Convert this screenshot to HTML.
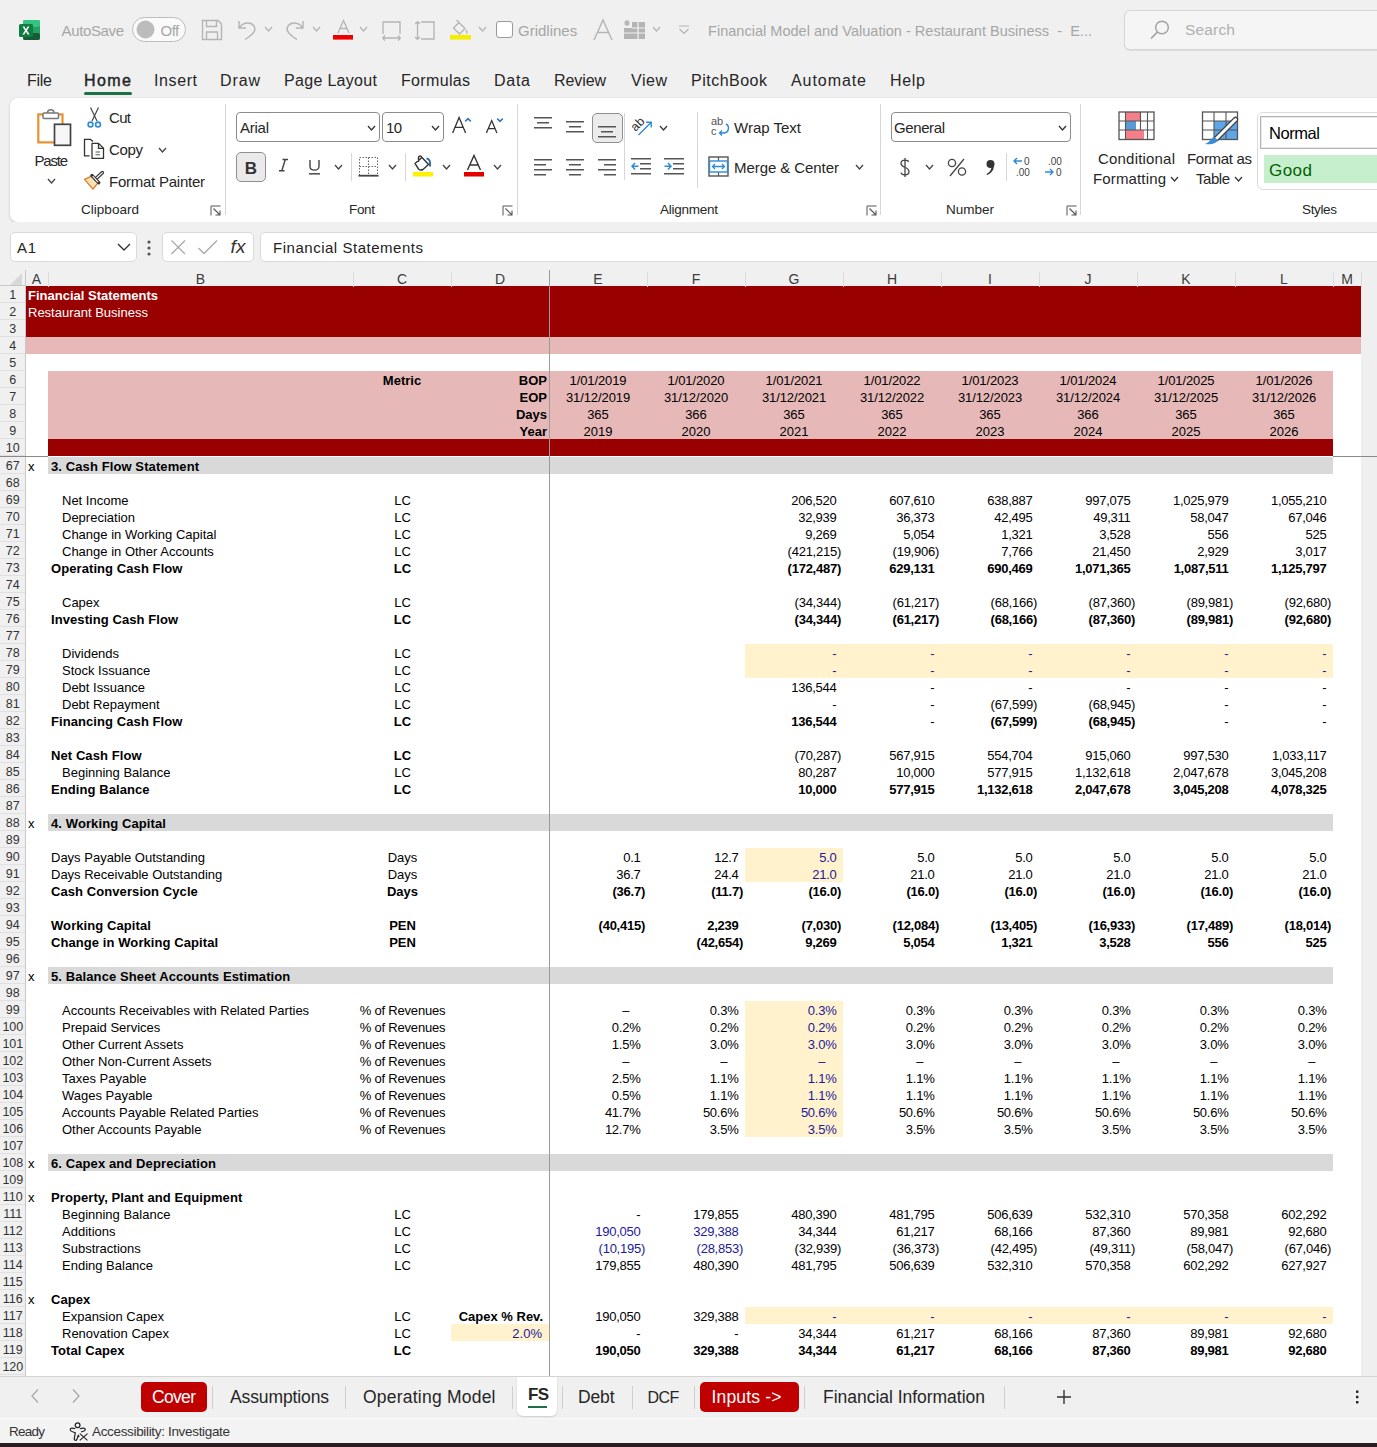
<!DOCTYPE html><html><head><meta charset="utf-8"><style>
*{margin:0;padding:0;box-sizing:border-box}
html,body{width:1377px;height:1447px;overflow:hidden;background:#f0f0f0;font-family:"Liberation Sans", sans-serif}
.t{position:absolute;white-space:pre}
.r{position:absolute}
</style></head><body><div class="r" style="left:0px;top:0px;width:1377px;height:98px;background:#f0f0f0;"></div><svg class="r" style="left:19px;top:19px;" width="22" height="22" viewBox="0 0 22 22"><rect x="4" y="1" width="17" height="20" rx="2" fill="#1f9d55"/><rect x="4" y="1" width="17" height="7" rx="2" fill="#33c481"/><rect x="11" y="8" width="10" height="7" fill="#21a366"/><rect x="4" y="14" width="17" height="7" rx="2" fill="#185c37"/><rect x="0" y="5" width="14" height="13" rx="1.5" fill="#107c41"/><path d="M3.6 7.5 L6 11.5 L3.4 15.5 H5.3 L7 12.7 L8.7 15.5 H10.6 L8 11.5 L10.4 7.5 H8.6 L7 10.3 L5.4 7.5Z" fill="#fff"/></svg><div class="t" style="top:23.30px;font-size:15px;line-height:15px;color:#a6a6a6;letter-spacing:-0.35px;left:61.5px;">AutoSave</div><div class="r" style="left:132px;top:17px;width:54px;height:25px;border:1.3px solid #bdbdbd;border-radius:13px;background:#fafafa"></div><svg class="r" style="left:136px;top:20px;" width="19" height="19" viewBox="0 0 19 19"><circle cx="9.5" cy="9.5" r="9" fill="#bcbcbc"/></svg><div class="t" style="top:23.30px;font-size:15px;line-height:15px;color:#a6a6a6;letter-spacing:-0.5px;left:160.5px;">Off</div><svg class="r" style="left:201px;top:19px;" width="22" height="22" viewBox="0 0 22 22"><path d="M1.5 1.5 H17 L20.5 5 V20.5 H1.5Z M5.5 1.5 V7.5 H15.5 V1.5 M5.5 20.5 V13 H16.5 V20.5" fill="none" stroke="#b4b4b4" stroke-width="1.4"/></svg><svg class="r" style="left:237px;top:19px;" width="21" height="22" viewBox="0 0 21 22"><path d="M2 2 V9 H9 M2.5 8.5 C6 3 14 2.5 17 7 C19.5 11 17 15 8 20.5" fill="none" stroke="#b4b4b4" stroke-width="1.4"/></svg><svg class="r" style="left:264px;top:26px;" width="9" height="6" viewBox="0 0 9 6"><path d="M1 1 L4.5 5 L8 1" fill="none" stroke="#b4b4b4" stroke-width="1.2"/></svg><svg class="r" style="left:284px;top:19px;" width="21" height="22" viewBox="0 0 21 22"><path d="M19 2 V9 H12 M18.5 8.5 C15 3 7 2.5 4 7 C1.5 11 4 15 13 20.5" fill="none" stroke="#b4b4b4" stroke-width="1.4"/></svg><svg class="r" style="left:312px;top:26px;" width="9" height="6" viewBox="0 0 9 6"><path d="M1 1 L4.5 5 L8 1" fill="none" stroke="#b4b4b4" stroke-width="1.2"/></svg><svg class="r" style="left:333px;top:19px;" width="21" height="22" viewBox="0 0 21 22"><path d="M5 14 L10.5 1.5 L16 14 M7 9.5 H14" fill="none" stroke="#b4b4b4" stroke-width="1.3"/><rect x="0" y="16" width="20" height="4.6" fill="#ee0000"/></svg><svg class="r" style="left:359px;top:26px;" width="9" height="6" viewBox="0 0 9 6"><path d="M1 1 L4.5 5 L8 1" fill="none" stroke="#b4b4b4" stroke-width="1.2"/></svg><svg class="r" style="left:381px;top:20px;" width="21" height="21" viewBox="0 0 21 21"><path d="M2 14 V2 H19 V14 M1.5 18 H19.5 M1.5 18 L4 15.5 M1.5 18 L4 20.5 M19.5 18 L17 15.5 M19.5 18 L17 20.5" fill="none" stroke="#b4b4b4" stroke-width="1.3"/></svg><svg class="r" style="left:415px;top:20px;" width="21" height="21" viewBox="0 0 21 21"><path d="M6 2 H19 V19 H6 M2.5 1.5 V19.5 M2.5 1.5 L0.2 4 M2.5 1.5 L4.8 4 M2.5 19.5 L0.2 17 M2.5 19.5 L4.8 17" fill="none" stroke="#b4b4b4" stroke-width="1.3"/></svg><svg class="r" style="left:450px;top:19px;" width="22" height="22" viewBox="0 0 22 22"><path d="M3.5 9 L9 3.5 L15 9.5 L9.5 15 Z M9 3.5 L6.5 1" fill="none" stroke="#b4b4b4" stroke-width="1.3"/><path d="M16 11 C17 12.5 17.5 13.5 16.5 14.5" fill="none" stroke="#b4b4b4" stroke-width="1.3"/><rect x="0" y="16" width="21" height="4.6" fill="#f5ee00"/></svg><svg class="r" style="left:478px;top:26px;" width="9" height="6" viewBox="0 0 9 6"><path d="M1 1 L4.5 5 L8 1" fill="none" stroke="#b4b4b4" stroke-width="1.2"/></svg><div class="r" style="left:496px;top:21px;width:17px;height:17px;border:1.3px solid #9a9a9a;border-radius:3px;background:#fff"></div><div class="t" style="top:23.30px;font-size:15px;line-height:15px;color:#a6a6a6;left:518px;">Gridlines</div><svg class="r" style="left:592px;top:18px;" width="22" height="24" viewBox="0 0 22 24"><path d="M2 22 L11 2 L20 22 M5.5 14.5 H16.5" fill="none" stroke="#b4b4b4" stroke-width="1.4"/></svg><svg class="r" style="left:623px;top:19px;" width="24" height="22" viewBox="0 0 24 22"><path d="M2 2 L6 6 M6 2 L2 6 M4 1 V7 M1 4 H7" stroke="#b4b4b4" stroke-width="1.2"/><rect x="9" y="3" width="13" height="17" fill="#b4b4b4"/><rect x="1" y="9" width="8" height="11" fill="#b4b4b4"/><path d="M1 14 H22 M9 9 H22 M15 3 V20" stroke="#f0f0f0" stroke-width="1.2"/></svg><svg class="r" style="left:652px;top:26px;" width="9" height="6" viewBox="0 0 9 6"><path d="M1 1 L4.5 5 L8 1" fill="none" stroke="#b4b4b4" stroke-width="1.2"/></svg><svg class="r" style="left:678px;top:24px;" width="12" height="12" viewBox="0 0 12 12"><path d="M1 2 H11 M1.5 5 L6 9.5 L10.5 5" fill="none" stroke="#b4b4b4" stroke-width="1.2"/></svg><div class="t" style="top:23.73px;font-size:14.5px;line-height:14.5px;color:#a6a6a6;letter-spacing:0.024px;left:708px;">Financial Model and Valuation - Restaurant Business  -  E...</div><div class="r" style="left:1124px;top:10px;width:270px;height:40px;border:1px solid #d6d6d6;border-radius:6px;background:#f5f5f5;box-shadow:0 1px 1px rgba(0,0,0,0.08)"></div><svg class="r" style="left:1149px;top:19px;" width="22" height="22" viewBox="0 0 22 22"><circle cx="13" cy="8.5" r="6.3" fill="none" stroke="#a0a0a0" stroke-width="1.4"/><path d="M8.5 13 L2 19.5" stroke="#a0a0a0" stroke-width="1.6"/></svg><div class="t" style="top:22.38px;font-size:15.5px;line-height:15.5px;color:#b0b0b0;letter-spacing:0.175px;left:1185px;">Search</div><div class="t" style="top:73.46px;font-size:16px;line-height:16px;color:#262626;letter-spacing:-0.260px;left:27px;">File</div><div class="t" style="top:73.46px;font-size:16px;line-height:16px;color:#262626;letter-spacing:1.438px;left:84px;-webkit-text-stroke:0.45px #262626;">Home</div><div class="t" style="top:73.46px;font-size:16px;line-height:16px;color:#262626;letter-spacing:0.597px;left:154px;">Insert</div><div class="t" style="top:73.46px;font-size:16px;line-height:16px;color:#262626;letter-spacing:0.885px;left:220px;">Draw</div><div class="t" style="top:73.46px;font-size:16px;line-height:16px;color:#262626;letter-spacing:0.314px;left:284px;">Page Layout</div><div class="t" style="top:73.46px;font-size:16px;line-height:16px;color:#262626;letter-spacing:0.330px;left:401px;">Formulas</div><div class="t" style="top:73.46px;font-size:16px;line-height:16px;color:#262626;letter-spacing:0.734px;left:494px;">Data</div><div class="t" style="top:73.46px;font-size:16px;line-height:16px;color:#262626;letter-spacing:-0.094px;left:554px;">Review</div><div class="t" style="top:73.46px;font-size:16px;line-height:16px;color:#262626;letter-spacing:0.536px;left:631px;">View</div><div class="t" style="top:73.46px;font-size:16px;line-height:16px;color:#262626;letter-spacing:0.494px;left:691px;">PitchBook</div><div class="t" style="top:73.46px;font-size:16px;line-height:16px;color:#262626;letter-spacing:0.931px;left:791px;">Automate</div><div class="t" style="top:73.46px;font-size:16px;line-height:16px;color:#262626;letter-spacing:0.698px;left:890px;">Help</div><div class="r" style="left:84px;top:92px;width:48px;height:3px;background:#1e7145;border-radius:1.5px"></div><div class="r" style="left:10px;top:98px;width:1400px;height:124px;background:#fff;border-radius:8px;box-shadow:0 1px 3px rgba(0,0,0,0.18)"></div><svg class="r" style="left:36px;top:106px;" width="38" height="42" viewBox="0 0 38 42"><rect x="2.3" y="8.4" width="24.2" height="28" fill="#fff" stroke="#e8912d" stroke-width="2.2"/><rect x="7" y="7" width="15.5" height="5.5" rx="1" fill="#fff" stroke="#777" stroke-width="1.5"/><path d="M11.5 7 C11.5 2.5 18 2.5 18 7" fill="none" stroke="#777" stroke-width="1.5"/><rect x="18.5" y="18.3" width="16" height="21" fill="#f7f7f7" stroke="#444" stroke-width="1.7"/></svg><div class="t" style="top:153.30px;font-size:15px;line-height:15px;color:#262626;letter-spacing:-1.215px;left:34.5px;">Paste</div><svg class="r" style="left:46.5px;top:178px;" width="9" height="6" viewBox="0 0 9 6"><path d="M1 1 L4.5 5 L8 1" fill="none" stroke="#444" stroke-width="1.3"/></svg><svg class="r" style="left:85px;top:106px;" width="20" height="22" viewBox="0 0 20 22"><path d="M5.5 1.5 L12 15 M13.5 1.5 L7 15" stroke="#444" stroke-width="1.2"/><circle cx="5.5" cy="18.5" r="2.4" fill="none" stroke="#2e8ad8" stroke-width="1.6"/><circle cx="13" cy="18.5" r="2.4" fill="none" stroke="#2e8ad8" stroke-width="1.6"/></svg><div class="t" style="top:110.30px;font-size:15px;line-height:15px;color:#262626;letter-spacing:-0.672px;left:109px;">Cut</div><svg class="r" style="left:83px;top:137px;" width="23" height="23" viewBox="0 0 23 23"><path d="M6.6 18.9 H1.5 V2.4 H7.5 L10 4.6" fill="none" stroke="#333" stroke-width="1.3"/><path d="M9 6.4 H15.5 L20.5 11.3 V21.4 H9 Z" fill="#fff" stroke="#333" stroke-width="1.3" stroke-linejoin="round"/><path d="M15.5 6.4 V11.3 H20.5" fill="none" stroke="#333" stroke-width="1.3"/><path d="M12.5 15 H17 M12.5 17.8 H17" stroke="#555" stroke-width="1.1"/></svg><div class="t" style="top:142.30px;font-size:15px;line-height:15px;color:#262626;letter-spacing:-0.344px;left:109px;">Copy</div><svg class="r" style="left:157.5px;top:147px;" width="9" height="6" viewBox="0 0 9 6"><path d="M1 1 L4.5 5 L8 1" fill="none" stroke="#444" stroke-width="1.3"/></svg><svg class="r" style="left:83px;top:170px;" width="24" height="22" viewBox="0 0 24 22"><path d="M1.5 9.3 L9.3 5.9 L15.4 12.4 L10 19.2 Z" fill="#fde0b8" stroke="#e07b24" stroke-width="1.3" stroke-linejoin="round"/><path d="M12.6 9.0 L19.3 2.6" stroke="#333" stroke-width="3.6" stroke-linecap="round"/><path d="M12.6 9.0 L19.3 2.6" stroke="#fff" stroke-width="1.2" stroke-linecap="round"/><path d="M9.0 5.6 L15.7 12.7" stroke="#333" stroke-width="3.4" stroke-linecap="round"/><path d="M9.6 6.2 L15.1 12.1" stroke="#fff" stroke-width="1.1"/></svg><div class="t" style="top:174.30px;font-size:15px;line-height:15px;color:#262626;letter-spacing:-0.246px;left:109px;">Format Painter</div><div class="t" style="top:202.57px;font-size:13.5px;line-height:13.5px;color:#262626;letter-spacing:0.025px;left:81px;">Clipboard</div><svg class="r" style="left:210px;top:205px;" width="12" height="12" viewBox="0 0 12 12"><path d="M1 1 H11 V11 H1 Z" fill="none" stroke="#666" stroke-width="0"/><path d="M1 10.5 V1 H10.5" fill="none" stroke="#555" stroke-width="1"/><path d="M3.5 3.5 L10 10 M10 5.5 V10 H5.5" fill="none" stroke="#555" stroke-width="1.1"/></svg><div class="r" style="left:225px;top:104px;width:1px;height:111px;background:#d6d6d6;"></div><div class="r" style="left:236px;top:112px;width:144px;height:30px;border:1px solid #8c8c8c;border-radius:4px;background:#fff"></div><div class="t" style="top:120.30px;font-size:15px;line-height:15px;color:#262626;letter-spacing:-0.254px;left:240px;">Arial</div><svg class="r" style="left:367px;top:125px;" width="9" height="6" viewBox="0 0 9 6"><path d="M1 1 L4.5 5 L8 1" fill="none" stroke="#333" stroke-width="1.3"/></svg><div class="r" style="left:382px;top:112px;width:62px;height:30px;border:1px solid #8c8c8c;border-radius:4px;background:#fff"></div><div class="t" style="top:120.30px;font-size:15px;line-height:15px;color:#262626;letter-spacing:-0.688px;left:386px;">10</div><svg class="r" style="left:431px;top:125px;" width="9" height="6" viewBox="0 0 9 6"><path d="M1 1 L4.5 5 L8 1" fill="none" stroke="#333" stroke-width="1.3"/></svg><svg class="r" style="left:450px;top:114px;" width="26" height="24" viewBox="0 0 26 24"><path d="M2.6 18.9 L9.1 3.4 L15.6 18.9 M5.1 13.3 H13.1" fill="none" stroke="#333" stroke-width="1.3"/><path d="M15.2 7.4 L18 4.6 L20.8 7.4" fill="none" stroke="#2e7ab8" stroke-width="1.5"/></svg><svg class="r" style="left:484px;top:114px;" width="24" height="24" viewBox="0 0 24 24"><path d="M2.4 18.9 L7.7 6.6 L12.9 18.9 M4.4 14.6 H11" fill="none" stroke="#333" stroke-width="1.3"/><path d="M13.2 4.6 L16 7.4 L18.8 4.6" fill="none" stroke="#2e7ab8" stroke-width="1.5"/></svg><div class="r" style="left:236px;top:152px;width:30px;height:30px;border:1px solid #8f8f8f;border-radius:5px;background:#eaeaea"></div><div class="t" style="top:159.61px;font-size:17px;line-height:17px;color:#333;font-weight:bold;left:-49px;width:600px;text-align:center;">B</div><svg class="r" style="left:277px;top:158px;" width="13" height="15" viewBox="0 0 13 15"><path d="M5.5 1.5 H11 M2 12.8 H7.5 M8.3 1.5 L4.8 12.8" fill="none" stroke="#444" stroke-width="1.4"/></svg><svg class="r" style="left:307px;top:158px;" width="16" height="18" viewBox="0 0 16 18"><path d="M3 2 V8.5 C3 13.3 12 13.3 12 8.5 V2" fill="none" stroke="#444" stroke-width="1.4"/><rect x="2" y="15" width="11" height="1.6" fill="#555"/></svg><svg class="r" style="left:333.5px;top:164px;" width="9" height="6" viewBox="0 0 9 6"><path d="M1 1 L4.5 5 L8 1" fill="none" stroke="#444" stroke-width="1.3"/></svg><div class="r" style="left:351px;top:153px;width:1px;height:28px;background:#d6d6d6;"></div><svg class="r" style="left:358px;top:156px;" width="22" height="22" viewBox="0 0 22 22"><path d="M1.5 1.5 H19.5 V19.5 H1.5 Z M10.5 1.5 V19.5 M1.5 10.5 H19.5" fill="none" stroke="#666" stroke-width="1" stroke-dasharray="1.5 1.5"/><rect x="0.5" y="18.8" width="20" height="1.8" fill="#444"/></svg><svg class="r" style="left:388px;top:164px;" width="9" height="6" viewBox="0 0 9 6"><path d="M1 1 L4.5 5 L8 1" fill="none" stroke="#444" stroke-width="1.3"/></svg><div class="r" style="left:405px;top:153px;width:1px;height:28px;background:#d6d6d6;"></div><svg class="r" style="left:411px;top:154px;" width="24" height="24" viewBox="0 0 24 24"><path d="M4 9.5 L11 3.5 L17.5 10.5 L12 15.5 C10 16.5 8.5 16 7.5 15 Z M11 3.5 C10 1.5 8 1.5 7.5 3.5 V8" fill="none" stroke="#333" stroke-width="1.4"/><path d="M15.5 4.5 C18.5 4.5 19.5 7.5 19 12.5" fill="none" stroke="#2e6ea8" stroke-width="2"/><rect x="2" y="18" width="20" height="4.5" fill="#fff200"/></svg><svg class="r" style="left:442px;top:164px;" width="9" height="6" viewBox="0 0 9 6"><path d="M1 1 L4.5 5 L8 1" fill="none" stroke="#444" stroke-width="1.3"/></svg><svg class="r" style="left:462px;top:154px;" width="24" height="24" viewBox="0 0 24 24"><path d="M5.5 16 L12 1.5 L18.5 16 M8 11 H16" fill="none" stroke="#333" stroke-width="1.4"/><rect x="2" y="18" width="20" height="4.5" fill="#e00000"/></svg><svg class="r" style="left:493px;top:164px;" width="9" height="6" viewBox="0 0 9 6"><path d="M1 1 L4.5 5 L8 1" fill="none" stroke="#444" stroke-width="1.3"/></svg><div class="t" style="top:202.57px;font-size:13.5px;line-height:13.5px;color:#262626;letter-spacing:-0.339px;left:349px;">Font</div><svg class="r" style="left:502px;top:205px;" width="12" height="12" viewBox="0 0 12 12"><path d="M1 1 H11 V11 H1 Z" fill="none" stroke="#666" stroke-width="0"/><path d="M1 10.5 V1 H10.5" fill="none" stroke="#555" stroke-width="1"/><path d="M3.5 3.5 L10 10 M10 5.5 V10 H5.5" fill="none" stroke="#555" stroke-width="1.1"/></svg><div class="r" style="left:517px;top:104px;width:1px;height:111px;background:#d6d6d6;"></div><svg class="r" style="left:534px;top:117px;" width="20" height="17" viewBox="0 0 20 17"><rect x="0" y="0" width="18" height="1.5" fill="#555"/><rect x="3" y="5" width="12" height="1.5" fill="#555"/><rect x="0" y="10" width="18" height="1.5" fill="#555"/></svg><svg class="r" style="left:566px;top:121px;" width="20" height="17" viewBox="0 0 20 17"><rect x="0" y="0" width="18" height="1.5" fill="#555"/><rect x="3" y="5" width="12" height="1.5" fill="#555"/><rect x="0" y="10" width="18" height="1.5" fill="#555"/></svg><div class="r" style="left:592px;top:113px;width:31px;height:30px;border:1px solid #8f8f8f;border-radius:5px;background:#ebebeb"></div><svg class="r" style="left:598px;top:126px;" width="20" height="17" viewBox="0 0 20 17"><rect x="0" y="0" width="18" height="1.5" fill="#555"/><rect x="3" y="5" width="12" height="1.5" fill="#555"/><rect x="0" y="10" width="18" height="1.5" fill="#555"/></svg><svg class="r" style="left:628px;top:112px;" width="26" height="26" viewBox="0 0 26 26"><text x="7.5" y="20" font-size="12.5" font-family="Liberation Sans" fill="#333" transform="rotate(-45 7.5 20)">ab</text><path d="M10.5 23 L23 10.5 M18 10.3 H23.2 V15.5" fill="none" stroke="#2e8ad8" stroke-width="1.4"/></svg><svg class="r" style="left:659px;top:124.5px;" width="9" height="6" viewBox="0 0 9 6"><path d="M1 1 L4.5 5 L8 1" fill="none" stroke="#333" stroke-width="1.2"/></svg><svg class="r" style="left:534px;top:159px;" width="20" height="22" viewBox="0 0 20 22"><rect x="0" y="0" width="18" height="1.5" fill="#555"/><rect x="0" y="5" width="12" height="1.5" fill="#555"/><rect x="0" y="10" width="18" height="1.5" fill="#555"/><rect x="0" y="15" width="12" height="1.5" fill="#555"/></svg><svg class="r" style="left:566px;top:159px;" width="20" height="22" viewBox="0 0 20 22"><rect x="0" y="0" width="18" height="1.5" fill="#555"/><rect x="3" y="5" width="12" height="1.5" fill="#555"/><rect x="0" y="10" width="18" height="1.5" fill="#555"/><rect x="3" y="15" width="12" height="1.5" fill="#555"/></svg><svg class="r" style="left:598px;top:159px;" width="20" height="22" viewBox="0 0 20 22"><rect x="0" y="0" width="18" height="1.5" fill="#555"/><rect x="6" y="5" width="12" height="1.5" fill="#555"/><rect x="0" y="10" width="18" height="1.5" fill="#555"/><rect x="6" y="15" width="12" height="1.5" fill="#555"/></svg><div class="r" style="left:624px;top:113px;width:1px;height:67px;background:#d6d6d6;"></div><svg class="r" style="left:631px;top:157px;" width="22" height="20" viewBox="0 0 22 20"><rect x="0" y="1" width="20" height="1.5" fill="#555"/><rect x="9" y="6" width="11" height="1.5" fill="#555"/><rect x="9" y="11" width="11" height="1.5" fill="#555"/><rect x="0" y="16" width="20" height="1.5" fill="#555"/><path d="M1 9.3 H7.5 M4 6 L1 9.3 L4 12.5" fill="none" stroke="#2e8ad8" stroke-width="1.5"/></svg><svg class="r" style="left:664px;top:157px;" width="22" height="20" viewBox="0 0 22 20"><rect x="0" y="1" width="20" height="1.5" fill="#555"/><rect x="9" y="6" width="11" height="1.5" fill="#555"/><rect x="9" y="11" width="11" height="1.5" fill="#555"/><rect x="0" y="16" width="20" height="1.5" fill="#555"/><path d="M0.5 9.3 H7 M4 6 L7 9.3 L4 12.5" fill="none" stroke="#2e8ad8" stroke-width="1.5"/></svg><div class="r" style="left:697px;top:112px;width:1px;height:76px;background:#d6d6d6;"></div><svg class="r" style="left:710px;top:115px;" width="22" height="24" viewBox="0 0 22 24"><text x="1" y="10" font-size="11" font-family="Liberation Sans" fill="#555">ab</text><text x="1" y="20" font-size="11" font-family="Liberation Sans" fill="#555">c</text><path d="M16 9 C20 11 19 18 13.5 18 H9.5 M12 15.5 L9.5 18 L12 20.5" fill="none" stroke="#2e8ad8" stroke-width="1.4"/></svg><div class="t" style="top:120.30px;font-size:15px;line-height:15px;color:#262626;letter-spacing:0.002px;left:734px;">Wrap Text</div><svg class="r" style="left:708px;top:156px;" width="22" height="21" viewBox="0 0 22 21"><rect x="1" y="1" width="19" height="19" fill="#fff" stroke="#555" stroke-width="1.4"/><path d="M10.5 1 V5 M10.5 16 V20" stroke="#555" stroke-width="1.2"/><rect x="1.5" y="5" width="18" height="11" fill="#fff" stroke="#2e8ad8" stroke-width="1.4"/><path d="M4.5 10.5 H16.5 M7 8 L4.5 10.5 L7 13 M14 8 L16.5 10.5 L14 13" fill="none" stroke="#2e8ad8" stroke-width="1.3"/></svg><div class="t" style="top:160.30px;font-size:15px;line-height:15px;color:#262626;letter-spacing:-0.069px;left:734px;">Merge &amp; Center</div><svg class="r" style="left:854.5px;top:164px;" width="9" height="6" viewBox="0 0 9 6"><path d="M1 1 L4.5 5 L8 1" fill="none" stroke="#444" stroke-width="1.3"/></svg><div class="t" style="top:202.57px;font-size:13.5px;line-height:13.5px;color:#262626;letter-spacing:-0.256px;left:660px;">Alignment</div><svg class="r" style="left:866px;top:205px;" width="12" height="12" viewBox="0 0 12 12"><path d="M1 1 H11 V11 H1 Z" fill="none" stroke="#666" stroke-width="0"/><path d="M1 10.5 V1 H10.5" fill="none" stroke="#555" stroke-width="1"/><path d="M3.5 3.5 L10 10 M10 5.5 V10 H5.5" fill="none" stroke="#555" stroke-width="1.1"/></svg><div class="r" style="left:880px;top:104px;width:1px;height:111px;background:#d6d6d6;"></div><div class="r" style="left:891px;top:112px;width:180px;height:30px;border:1px solid #8c8c8c;border-radius:4px;background:#fff"></div><div class="t" style="top:120.30px;font-size:15px;line-height:15px;color:#262626;letter-spacing:-0.396px;left:894px;">General</div><svg class="r" style="left:1058px;top:125px;" width="9" height="6" viewBox="0 0 9 6"><path d="M1 1 L4.5 5 L8 1" fill="none" stroke="#333" stroke-width="1.3"/></svg><svg class="r" style="left:898px;top:157px;" width="14" height="21" viewBox="0 0 14 21"><path d="M10.5 5 C10 2.5 3 2 3 6.5 C3 11 11 9.5 11 14.5 C11 19 3.5 18.5 3 15.5 M7 1 V20" fill="none" stroke="#444" stroke-width="1.3"/></svg><svg class="r" style="left:925px;top:164px;" width="9" height="6" viewBox="0 0 9 6"><path d="M1 1 L4.5 5 L8 1" fill="none" stroke="#444" stroke-width="1.3"/></svg><svg class="r" style="left:947px;top:158px;" width="21" height="19" viewBox="0 0 21 19"><circle cx="5" cy="5" r="3.6" fill="none" stroke="#444" stroke-width="1.3"/><circle cx="15" cy="13.5" r="3.6" fill="none" stroke="#444" stroke-width="1.3"/><path d="M17 1 L3 18" stroke="#444" stroke-width="1.3"/></svg><svg class="r" style="left:984px;top:159px;" width="12" height="17" viewBox="0 0 12 17"><circle cx="6.5" cy="5" r="4" fill="#333"/><path d="M9.5 6 C10.5 10 8 14 3 16 L2.5 15 C6 13 7.5 10.5 7.5 7.5Z" fill="#333"/></svg><div class="r" style="left:1006px;top:153px;width:1px;height:28px;background:#d6d6d6;"></div><svg class="r" style="left:1012px;top:155px;" width="26" height="24" viewBox="0 0 26 24"><path d="M2 6 H10 M5 3 L2 6 L5 9" fill="none" stroke="#2e8ad8" stroke-width="1.4"/><text x="12" y="10" font-size="10" font-family="Liberation Sans" fill="#444">0</text><text x="4" y="21" font-size="10" font-family="Liberation Sans" fill="#444">.00</text></svg><svg class="r" style="left:1044px;top:155px;" width="26" height="24" viewBox="0 0 26 24"><text x="4" y="10" font-size="10" font-family="Liberation Sans" fill="#444">.00</text><path d="M1 17 H9 M6 14 L9 17 L6 20" fill="none" stroke="#2e8ad8" stroke-width="1.4"/><text x="12" y="21" font-size="10" font-family="Liberation Sans" fill="#444">0</text></svg><div class="t" style="top:202.57px;font-size:13.5px;line-height:13.5px;color:#262626;letter-spacing:-0.003px;left:946px;">Number</div><svg class="r" style="left:1066px;top:205px;" width="12" height="12" viewBox="0 0 12 12"><path d="M1 1 H11 V11 H1 Z" fill="none" stroke="#666" stroke-width="0"/><path d="M1 10.5 V1 H10.5" fill="none" stroke="#555" stroke-width="1"/><path d="M3.5 3.5 L10 10 M10 5.5 V10 H5.5" fill="none" stroke="#555" stroke-width="1.1"/></svg><div class="r" style="left:1080px;top:104px;width:1px;height:111px;background:#d6d6d6;"></div><svg class="r" style="left:1118px;top:111px;" width="38" height="31" viewBox="0 0 38 31"><rect x="7.5" y="1" width="15" height="9" fill="#f47f88"/><rect x="7.5" y="10" width="10.5" height="9" fill="#5b9bd5"/><rect x="7.5" y="19" width="18.5" height="9.5" fill="#f47f88"/><rect x="1" y="1" width="35" height="27.5" fill="none" stroke="#555" stroke-width="1.3"/><path d="M1 10 H36 M1 19 H36 M7.5 1 V28.5 M22.5 1 V19 M29.5 1 V28.5" stroke="#555" stroke-width="1.1"/></svg><div class="t" style="top:151.30px;font-size:15px;line-height:15px;color:#262626;letter-spacing:0.194px;left:1098px;">Conditional</div><div class="t" style="top:171.30px;font-size:15px;line-height:15px;color:#262626;letter-spacing:0.144px;left:1093px;">Formatting</div><svg class="r" style="left:1170px;top:176px;" width="9" height="6" viewBox="0 0 9 6"><path d="M1 1 L4.5 5 L8 1" fill="none" stroke="#333" stroke-width="1.2"/></svg><svg class="r" style="left:1201px;top:111px;" width="40" height="34" viewBox="0 0 40 34"><rect x="13" y="10" width="24" height="18.5" fill="#5ea6e8"/><rect x="1.5" y="1" width="35" height="27.5" fill="none" stroke="#555" stroke-width="1.3"/><path d="M1.5 10 H36.5 M1.5 19 H36.5 M13 1 V28.5 M25 1 V28.5" stroke="#555" stroke-width="1.1"/><path d="M13 27 L33 7 C35 5 38 8 36 10 L16 30" fill="#fff" stroke="#444" stroke-width="1.3"/><path d="M13 26 C10 27 9 31 4 33 C9 34 15 33 17 29Z" fill="#3b8ad6"/></svg><div class="t" style="top:151.30px;font-size:15px;line-height:15px;color:#262626;letter-spacing:-0.314px;left:1187px;">Format as</div><div class="t" style="top:171.30px;font-size:15px;line-height:15px;color:#262626;letter-spacing:-0.465px;left:1196px;">Table</div><svg class="r" style="left:1234px;top:176px;" width="9" height="6" viewBox="0 0 9 6"><path d="M1 1 L4.5 5 L8 1" fill="none" stroke="#333" stroke-width="1.2"/></svg><div class="r" style="left:1257px;top:112px;width:140px;height:78px;border:1px solid #dcdcdc;border-radius:6px;background:#fff"></div><div class="r" style="left:1260px;top:116px;width:130px;height:33px;border:1px solid #b4b4b4;background:#fff;box-shadow:inset 0 0 0 1px #e8e8e8"></div><div class="t" style="top:125.03px;font-size:16.5px;line-height:16.5px;color:#000;letter-spacing:-0.438px;left:1269px;">Normal</div><div class="r" style="left:1264px;top:155px;width:130px;height:28px;background:#c6efce;"></div><div class="t" style="top:161.61px;font-size:17px;line-height:17px;color:#006100;letter-spacing:0.469px;left:1269px;">Good</div><div class="t" style="top:202.57px;font-size:13.5px;line-height:13.5px;color:#262626;letter-spacing:-0.353px;left:1302px;">Styles</div><div class="r" style="left:0px;top:222px;width:1377px;height:48px;background:#f0f0f0;"></div><div class="r" style="left:10px;top:232px;width:127px;height:30px;border:1px solid #dadada;border-radius:5px;background:#fff"></div><div class="t" style="top:240.30px;font-size:15px;line-height:15px;color:#222;letter-spacing:0.641px;left:17px;">A1</div><svg class="r" style="left:117px;top:243px;" width="14" height="8" viewBox="0 0 14 8"><path d="M1 1 L7.0 7 L13 1" fill="none" stroke="#333" stroke-width="1.4"/></svg><svg class="r" style="left:146px;top:239px;" width="6" height="18" viewBox="0 0 6 18"><circle cx="3" cy="3" r="1.6" fill="#555"/><circle cx="3" cy="9" r="1.6" fill="#555"/><circle cx="3" cy="15" r="1.6" fill="#555"/></svg><div class="r" style="left:162px;top:232px;width:92px;height:30px;border:1px solid #dadada;border-radius:5px;background:#fff"></div><svg class="r" style="left:170px;top:239px;" width="17" height="17" viewBox="0 0 17 17"><path d="M1.5 1.5 L15 15 M15 1.5 L1.5 15" stroke="#a8a8a8" stroke-width="1.3"/></svg><svg class="r" style="left:197px;top:239px;" width="22" height="17" viewBox="0 0 22 17"><path d="M1.5 9 L7 14.5 L20 1.5" fill="none" stroke="#a8a8a8" stroke-width="1.3"/></svg><div class="t" style="top:236.92px;font-size:19px;line-height:19px;color:#333;left:-62px;width:600px;text-align:center;font-style:italic;font-family:"Liberation Serif",serif;">fx</div><div class="r" style="left:260px;top:232px;width:1130px;height:30px;border:1px solid #dadada;border-radius:5px;background:#fff"></div><div class="t" style="top:240.30px;font-size:15px;line-height:15px;color:#222;letter-spacing:0.522px;left:273px;">Financial Statements</div><div class="r" style="left:0px;top:270px;width:1377px;height:1108px;background:#ffffff;"></div><div class="r" style="left:0px;top:270px;width:1361px;height:16px;background:#f0f0f0;"></div><div class="r" style="left:0px;top:286px;width:25px;height:1091px;background:#f0f0f0;"></div><div class="r" style="left:1361px;top:262px;width:16px;height:1116px;background:#efefef;"></div><div class="r" style="left:25px;top:286px;width:1336px;height:51px;background:#990000;"></div><div class="r" style="left:25px;top:337px;width:1336px;height:17px;background:#e6b8b7;"></div><div class="r" style="left:48px;top:371px;width:1285px;height:68px;background:#e6b8b7;"></div><div class="r" style="left:48px;top:439px;width:1285px;height:17px;background:#990000;"></div><div class="r" style="left:48px;top:457px;width:1285px;height:17px;background:#d9d9d9;"></div><div class="r" style="left:48px;top:814px;width:1285px;height:17px;background:#d9d9d9;"></div><div class="r" style="left:48px;top:967px;width:1285px;height:17px;background:#d9d9d9;"></div><div class="r" style="left:48px;top:1154px;width:1285px;height:17px;background:#d9d9d9;"></div><div class="r" style="left:745px;top:644px;width:588px;height:34px;background:#fff2cc;"></div><div class="r" style="left:745px;top:848px;width:98px;height:34px;background:#fff2cc;"></div><div class="r" style="left:745px;top:1001px;width:98px;height:136px;background:#fff2cc;"></div><div class="r" style="left:745px;top:1307px;width:588px;height:17px;background:#fff2cc;"></div><div class="r" style="left:451px;top:1324px;width:98px;height:17px;background:#fff2cc;"></div><!--GRIDTEXT--><div class="t" style="top:289.00px;font-size:13px;line-height:13px;color:#fff;font-weight:bold;left:28px;">Financial Statements</div><div class="t" style="top:306.00px;font-size:13px;line-height:13px;color:#fff;left:28px;">Restaurant Business</div><div class="t" style="top:374.00px;font-size:13px;line-height:13px;color:#000;font-weight:bold;left:102px;width:600px;text-align:center;">Metric</div><div class="t" style="top:374.00px;font-size:13px;line-height:13px;color:#000;font-weight:bold;left:-53px;width:600px;text-align:right;">BOP</div><div class="t" style="top:391.00px;font-size:13px;line-height:13px;color:#000;font-weight:bold;left:-53px;width:600px;text-align:right;">EOP</div><div class="t" style="top:408.00px;font-size:13px;line-height:13px;color:#000;font-weight:bold;left:-53px;width:600px;text-align:right;">Days</div><div class="t" style="top:425.00px;font-size:13px;line-height:13px;color:#000;font-weight:bold;left:-53px;width:600px;text-align:right;">Year</div><div class="t" style="top:374.00px;font-size:13px;line-height:13px;color:#000;letter-spacing:-0.1px;left:298.0px;width:600px;text-align:center;">1/01/2019</div><div class="t" style="top:391.00px;font-size:13px;line-height:13px;color:#000;letter-spacing:-0.1px;left:298.0px;width:600px;text-align:center;">31/12/2019</div><div class="t" style="top:408.00px;font-size:13px;line-height:13px;color:#000;left:298.0px;width:600px;text-align:center;">365</div><div class="t" style="top:425.00px;font-size:13px;line-height:13px;color:#000;left:298.0px;width:600px;text-align:center;">2019</div><div class="t" style="top:374.00px;font-size:13px;line-height:13px;color:#000;letter-spacing:-0.1px;left:396.0px;width:600px;text-align:center;">1/01/2020</div><div class="t" style="top:391.00px;font-size:13px;line-height:13px;color:#000;letter-spacing:-0.1px;left:396.0px;width:600px;text-align:center;">31/12/2020</div><div class="t" style="top:408.00px;font-size:13px;line-height:13px;color:#000;left:396.0px;width:600px;text-align:center;">366</div><div class="t" style="top:425.00px;font-size:13px;line-height:13px;color:#000;left:396.0px;width:600px;text-align:center;">2020</div><div class="t" style="top:374.00px;font-size:13px;line-height:13px;color:#000;letter-spacing:-0.1px;left:494.0px;width:600px;text-align:center;">1/01/2021</div><div class="t" style="top:391.00px;font-size:13px;line-height:13px;color:#000;letter-spacing:-0.1px;left:494.0px;width:600px;text-align:center;">31/12/2021</div><div class="t" style="top:408.00px;font-size:13px;line-height:13px;color:#000;left:494.0px;width:600px;text-align:center;">365</div><div class="t" style="top:425.00px;font-size:13px;line-height:13px;color:#000;left:494.0px;width:600px;text-align:center;">2021</div><div class="t" style="top:374.00px;font-size:13px;line-height:13px;color:#000;letter-spacing:-0.1px;left:592.0px;width:600px;text-align:center;">1/01/2022</div><div class="t" style="top:391.00px;font-size:13px;line-height:13px;color:#000;letter-spacing:-0.1px;left:592.0px;width:600px;text-align:center;">31/12/2022</div><div class="t" style="top:408.00px;font-size:13px;line-height:13px;color:#000;left:592.0px;width:600px;text-align:center;">365</div><div class="t" style="top:425.00px;font-size:13px;line-height:13px;color:#000;left:592.0px;width:600px;text-align:center;">2022</div><div class="t" style="top:374.00px;font-size:13px;line-height:13px;color:#000;letter-spacing:-0.1px;left:690.0px;width:600px;text-align:center;">1/01/2023</div><div class="t" style="top:391.00px;font-size:13px;line-height:13px;color:#000;letter-spacing:-0.1px;left:690.0px;width:600px;text-align:center;">31/12/2023</div><div class="t" style="top:408.00px;font-size:13px;line-height:13px;color:#000;left:690.0px;width:600px;text-align:center;">365</div><div class="t" style="top:425.00px;font-size:13px;line-height:13px;color:#000;left:690.0px;width:600px;text-align:center;">2023</div><div class="t" style="top:374.00px;font-size:13px;line-height:13px;color:#000;letter-spacing:-0.1px;left:788.0px;width:600px;text-align:center;">1/01/2024</div><div class="t" style="top:391.00px;font-size:13px;line-height:13px;color:#000;letter-spacing:-0.1px;left:788.0px;width:600px;text-align:center;">31/12/2024</div><div class="t" style="top:408.00px;font-size:13px;line-height:13px;color:#000;left:788.0px;width:600px;text-align:center;">366</div><div class="t" style="top:425.00px;font-size:13px;line-height:13px;color:#000;left:788.0px;width:600px;text-align:center;">2024</div><div class="t" style="top:374.00px;font-size:13px;line-height:13px;color:#000;letter-spacing:-0.1px;left:886.0px;width:600px;text-align:center;">1/01/2025</div><div class="t" style="top:391.00px;font-size:13px;line-height:13px;color:#000;letter-spacing:-0.1px;left:886.0px;width:600px;text-align:center;">31/12/2025</div><div class="t" style="top:408.00px;font-size:13px;line-height:13px;color:#000;left:886.0px;width:600px;text-align:center;">365</div><div class="t" style="top:425.00px;font-size:13px;line-height:13px;color:#000;left:886.0px;width:600px;text-align:center;">2025</div><div class="t" style="top:374.00px;font-size:13px;line-height:13px;color:#000;letter-spacing:-0.1px;left:984.0px;width:600px;text-align:center;">1/01/2026</div><div class="t" style="top:391.00px;font-size:13px;line-height:13px;color:#000;letter-spacing:-0.1px;left:984.0px;width:600px;text-align:center;">31/12/2026</div><div class="t" style="top:408.00px;font-size:13px;line-height:13px;color:#000;left:984.0px;width:600px;text-align:center;">365</div><div class="t" style="top:425.00px;font-size:13px;line-height:13px;color:#000;left:984.0px;width:600px;text-align:center;">2026</div><div class="t" style="top:460.00px;font-size:13px;line-height:13px;color:#000;left:28px;">x</div><div class="t" style="top:460.00px;font-size:13px;line-height:13px;color:#000;font-weight:bold;letter-spacing:0.1px;left:51px;">3. Cash Flow Statement</div><div class="t" style="top:494.00px;font-size:13px;line-height:13px;color:#000;left:62px;">Net Income</div><div class="t" style="top:494.00px;font-size:13px;line-height:13px;color:#000;left:102.5px;width:600px;text-align:center;">LC</div><div class="t" style="top:494.00px;font-size:13px;line-height:13px;color:#000;letter-spacing:-0.25px;left:236.5px;width:600px;text-align:right;">206,520</div><div class="t" style="top:494.00px;font-size:13px;line-height:13px;color:#000;letter-spacing:-0.25px;left:334.5px;width:600px;text-align:right;">607,610</div><div class="t" style="top:494.00px;font-size:13px;line-height:13px;color:#000;letter-spacing:-0.25px;left:432.5px;width:600px;text-align:right;">638,887</div><div class="t" style="top:494.00px;font-size:13px;line-height:13px;color:#000;letter-spacing:-0.25px;left:530.5px;width:600px;text-align:right;">997,075</div><div class="t" style="top:494.00px;font-size:13px;line-height:13px;color:#000;letter-spacing:-0.25px;left:628.5px;width:600px;text-align:right;">1,025,979</div><div class="t" style="top:494.00px;font-size:13px;line-height:13px;color:#000;letter-spacing:-0.25px;left:726.5px;width:600px;text-align:right;">1,055,210</div><div class="t" style="top:511.00px;font-size:13px;line-height:13px;color:#000;left:62px;">Depreciation</div><div class="t" style="top:511.00px;font-size:13px;line-height:13px;color:#000;left:102.5px;width:600px;text-align:center;">LC</div><div class="t" style="top:511.00px;font-size:13px;line-height:13px;color:#000;letter-spacing:-0.25px;left:236.5px;width:600px;text-align:right;">32,939</div><div class="t" style="top:511.00px;font-size:13px;line-height:13px;color:#000;letter-spacing:-0.25px;left:334.5px;width:600px;text-align:right;">36,373</div><div class="t" style="top:511.00px;font-size:13px;line-height:13px;color:#000;letter-spacing:-0.25px;left:432.5px;width:600px;text-align:right;">42,495</div><div class="t" style="top:511.00px;font-size:13px;line-height:13px;color:#000;letter-spacing:-0.25px;left:530.5px;width:600px;text-align:right;">49,311</div><div class="t" style="top:511.00px;font-size:13px;line-height:13px;color:#000;letter-spacing:-0.25px;left:628.5px;width:600px;text-align:right;">58,047</div><div class="t" style="top:511.00px;font-size:13px;line-height:13px;color:#000;letter-spacing:-0.25px;left:726.5px;width:600px;text-align:right;">67,046</div><div class="t" style="top:528.00px;font-size:13px;line-height:13px;color:#000;left:62px;">Change in Working Capital</div><div class="t" style="top:528.00px;font-size:13px;line-height:13px;color:#000;left:102.5px;width:600px;text-align:center;">LC</div><div class="t" style="top:528.00px;font-size:13px;line-height:13px;color:#000;letter-spacing:-0.25px;left:236.5px;width:600px;text-align:right;">9,269</div><div class="t" style="top:528.00px;font-size:13px;line-height:13px;color:#000;letter-spacing:-0.25px;left:334.5px;width:600px;text-align:right;">5,054</div><div class="t" style="top:528.00px;font-size:13px;line-height:13px;color:#000;letter-spacing:-0.25px;left:432.5px;width:600px;text-align:right;">1,321</div><div class="t" style="top:528.00px;font-size:13px;line-height:13px;color:#000;letter-spacing:-0.25px;left:530.5px;width:600px;text-align:right;">3,528</div><div class="t" style="top:528.00px;font-size:13px;line-height:13px;color:#000;letter-spacing:-0.25px;left:628.5px;width:600px;text-align:right;">556</div><div class="t" style="top:528.00px;font-size:13px;line-height:13px;color:#000;letter-spacing:-0.25px;left:726.5px;width:600px;text-align:right;">525</div><div class="t" style="top:545.00px;font-size:13px;line-height:13px;color:#000;left:62px;">Change in Other Accounts</div><div class="t" style="top:545.00px;font-size:13px;line-height:13px;color:#000;left:102.5px;width:600px;text-align:center;">LC</div><div class="t" style="top:545.00px;font-size:13px;line-height:13px;color:#000;letter-spacing:-0.25px;left:241px;width:600px;text-align:right;">(421,215)</div><div class="t" style="top:545.00px;font-size:13px;line-height:13px;color:#000;letter-spacing:-0.25px;left:339px;width:600px;text-align:right;">(19,906)</div><div class="t" style="top:545.00px;font-size:13px;line-height:13px;color:#000;letter-spacing:-0.25px;left:432.5px;width:600px;text-align:right;">7,766</div><div class="t" style="top:545.00px;font-size:13px;line-height:13px;color:#000;letter-spacing:-0.25px;left:530.5px;width:600px;text-align:right;">21,450</div><div class="t" style="top:545.00px;font-size:13px;line-height:13px;color:#000;letter-spacing:-0.25px;left:628.5px;width:600px;text-align:right;">2,929</div><div class="t" style="top:545.00px;font-size:13px;line-height:13px;color:#000;letter-spacing:-0.25px;left:726.5px;width:600px;text-align:right;">3,017</div><div class="t" style="top:562.00px;font-size:13px;line-height:13px;color:#000;font-weight:bold;letter-spacing:0.08px;left:51px;">Operating Cash Flow</div><div class="t" style="top:562.00px;font-size:13px;line-height:13px;color:#000;font-weight:bold;left:102.5px;width:600px;text-align:center;">LC</div><div class="t" style="top:562.00px;font-size:13px;line-height:13px;color:#000;font-weight:bold;letter-spacing:-0.25px;left:241px;width:600px;text-align:right;">(172,487)</div><div class="t" style="top:562.00px;font-size:13px;line-height:13px;color:#000;font-weight:bold;letter-spacing:-0.25px;left:334.5px;width:600px;text-align:right;">629,131</div><div class="t" style="top:562.00px;font-size:13px;line-height:13px;color:#000;font-weight:bold;letter-spacing:-0.25px;left:432.5px;width:600px;text-align:right;">690,469</div><div class="t" style="top:562.00px;font-size:13px;line-height:13px;color:#000;font-weight:bold;letter-spacing:-0.25px;left:530.5px;width:600px;text-align:right;">1,071,365</div><div class="t" style="top:562.00px;font-size:13px;line-height:13px;color:#000;font-weight:bold;letter-spacing:-0.25px;left:628.5px;width:600px;text-align:right;">1,087,511</div><div class="t" style="top:562.00px;font-size:13px;line-height:13px;color:#000;font-weight:bold;letter-spacing:-0.25px;left:726.5px;width:600px;text-align:right;">1,125,797</div><div class="t" style="top:596.00px;font-size:13px;line-height:13px;color:#000;left:62px;">Capex</div><div class="t" style="top:596.00px;font-size:13px;line-height:13px;color:#000;left:102.5px;width:600px;text-align:center;">LC</div><div class="t" style="top:596.00px;font-size:13px;line-height:13px;color:#000;letter-spacing:-0.25px;left:241px;width:600px;text-align:right;">(34,344)</div><div class="t" style="top:596.00px;font-size:13px;line-height:13px;color:#000;letter-spacing:-0.25px;left:339px;width:600px;text-align:right;">(61,217)</div><div class="t" style="top:596.00px;font-size:13px;line-height:13px;color:#000;letter-spacing:-0.25px;left:437px;width:600px;text-align:right;">(68,166)</div><div class="t" style="top:596.00px;font-size:13px;line-height:13px;color:#000;letter-spacing:-0.25px;left:535px;width:600px;text-align:right;">(87,360)</div><div class="t" style="top:596.00px;font-size:13px;line-height:13px;color:#000;letter-spacing:-0.25px;left:633px;width:600px;text-align:right;">(89,981)</div><div class="t" style="top:596.00px;font-size:13px;line-height:13px;color:#000;letter-spacing:-0.25px;left:731px;width:600px;text-align:right;">(92,680)</div><div class="t" style="top:613.00px;font-size:13px;line-height:13px;color:#000;font-weight:bold;letter-spacing:0.08px;left:51px;">Investing Cash Flow</div><div class="t" style="top:613.00px;font-size:13px;line-height:13px;color:#000;font-weight:bold;left:102.5px;width:600px;text-align:center;">LC</div><div class="t" style="top:613.00px;font-size:13px;line-height:13px;color:#000;font-weight:bold;letter-spacing:-0.25px;left:241px;width:600px;text-align:right;">(34,344)</div><div class="t" style="top:613.00px;font-size:13px;line-height:13px;color:#000;font-weight:bold;letter-spacing:-0.25px;left:339px;width:600px;text-align:right;">(61,217)</div><div class="t" style="top:613.00px;font-size:13px;line-height:13px;color:#000;font-weight:bold;letter-spacing:-0.25px;left:437px;width:600px;text-align:right;">(68,166)</div><div class="t" style="top:613.00px;font-size:13px;line-height:13px;color:#000;font-weight:bold;letter-spacing:-0.25px;left:535px;width:600px;text-align:right;">(87,360)</div><div class="t" style="top:613.00px;font-size:13px;line-height:13px;color:#000;font-weight:bold;letter-spacing:-0.25px;left:633px;width:600px;text-align:right;">(89,981)</div><div class="t" style="top:613.00px;font-size:13px;line-height:13px;color:#000;font-weight:bold;letter-spacing:-0.25px;left:731px;width:600px;text-align:right;">(92,680)</div><div class="t" style="top:647.00px;font-size:13px;line-height:13px;color:#000;left:62px;">Dividends</div><div class="t" style="top:647.00px;font-size:13px;line-height:13px;color:#000;left:102.5px;width:600px;text-align:center;">LC</div><div class="t" style="top:647.00px;font-size:13px;line-height:13px;color:#22199a;left:236.5px;width:600px;text-align:right;">-</div><div class="t" style="top:647.00px;font-size:13px;line-height:13px;color:#22199a;left:334.5px;width:600px;text-align:right;">-</div><div class="t" style="top:647.00px;font-size:13px;line-height:13px;color:#22199a;left:432.5px;width:600px;text-align:right;">-</div><div class="t" style="top:647.00px;font-size:13px;line-height:13px;color:#22199a;left:530.5px;width:600px;text-align:right;">-</div><div class="t" style="top:647.00px;font-size:13px;line-height:13px;color:#22199a;left:628.5px;width:600px;text-align:right;">-</div><div class="t" style="top:647.00px;font-size:13px;line-height:13px;color:#22199a;left:726.5px;width:600px;text-align:right;">-</div><div class="t" style="top:664.00px;font-size:13px;line-height:13px;color:#000;left:62px;">Stock Issuance</div><div class="t" style="top:664.00px;font-size:13px;line-height:13px;color:#000;left:102.5px;width:600px;text-align:center;">LC</div><div class="t" style="top:664.00px;font-size:13px;line-height:13px;color:#22199a;left:236.5px;width:600px;text-align:right;">-</div><div class="t" style="top:664.00px;font-size:13px;line-height:13px;color:#22199a;left:334.5px;width:600px;text-align:right;">-</div><div class="t" style="top:664.00px;font-size:13px;line-height:13px;color:#22199a;left:432.5px;width:600px;text-align:right;">-</div><div class="t" style="top:664.00px;font-size:13px;line-height:13px;color:#22199a;left:530.5px;width:600px;text-align:right;">-</div><div class="t" style="top:664.00px;font-size:13px;line-height:13px;color:#22199a;left:628.5px;width:600px;text-align:right;">-</div><div class="t" style="top:664.00px;font-size:13px;line-height:13px;color:#22199a;left:726.5px;width:600px;text-align:right;">-</div><div class="t" style="top:681.00px;font-size:13px;line-height:13px;color:#000;left:62px;">Debt Issuance</div><div class="t" style="top:681.00px;font-size:13px;line-height:13px;color:#000;left:102.5px;width:600px;text-align:center;">LC</div><div class="t" style="top:681.00px;font-size:13px;line-height:13px;color:#000;letter-spacing:-0.25px;left:236.5px;width:600px;text-align:right;">136,544</div><div class="t" style="top:681.00px;font-size:13px;line-height:13px;color:#000;left:334.5px;width:600px;text-align:right;">-</div><div class="t" style="top:681.00px;font-size:13px;line-height:13px;color:#000;left:432.5px;width:600px;text-align:right;">-</div><div class="t" style="top:681.00px;font-size:13px;line-height:13px;color:#000;left:530.5px;width:600px;text-align:right;">-</div><div class="t" style="top:681.00px;font-size:13px;line-height:13px;color:#000;left:628.5px;width:600px;text-align:right;">-</div><div class="t" style="top:681.00px;font-size:13px;line-height:13px;color:#000;left:726.5px;width:600px;text-align:right;">-</div><div class="t" style="top:698.00px;font-size:13px;line-height:13px;color:#000;left:62px;">Debt Repayment</div><div class="t" style="top:698.00px;font-size:13px;line-height:13px;color:#000;left:102.5px;width:600px;text-align:center;">LC</div><div class="t" style="top:698.00px;font-size:13px;line-height:13px;color:#000;left:236.5px;width:600px;text-align:right;">-</div><div class="t" style="top:698.00px;font-size:13px;line-height:13px;color:#000;left:334.5px;width:600px;text-align:right;">-</div><div class="t" style="top:698.00px;font-size:13px;line-height:13px;color:#000;letter-spacing:-0.25px;left:437px;width:600px;text-align:right;">(67,599)</div><div class="t" style="top:698.00px;font-size:13px;line-height:13px;color:#000;letter-spacing:-0.25px;left:535px;width:600px;text-align:right;">(68,945)</div><div class="t" style="top:698.00px;font-size:13px;line-height:13px;color:#000;left:628.5px;width:600px;text-align:right;">-</div><div class="t" style="top:698.00px;font-size:13px;line-height:13px;color:#000;left:726.5px;width:600px;text-align:right;">-</div><div class="t" style="top:715.00px;font-size:13px;line-height:13px;color:#000;font-weight:bold;letter-spacing:0.08px;left:51px;">Financing Cash Flow</div><div class="t" style="top:715.00px;font-size:13px;line-height:13px;color:#000;font-weight:bold;left:102.5px;width:600px;text-align:center;">LC</div><div class="t" style="top:715.00px;font-size:13px;line-height:13px;color:#000;font-weight:bold;letter-spacing:-0.25px;left:236.5px;width:600px;text-align:right;">136,544</div><div class="t" style="top:715.00px;font-size:13px;line-height:13px;color:#000;left:334.5px;width:600px;text-align:right;">-</div><div class="t" style="top:715.00px;font-size:13px;line-height:13px;color:#000;font-weight:bold;letter-spacing:-0.25px;left:437px;width:600px;text-align:right;">(67,599)</div><div class="t" style="top:715.00px;font-size:13px;line-height:13px;color:#000;font-weight:bold;letter-spacing:-0.25px;left:535px;width:600px;text-align:right;">(68,945)</div><div class="t" style="top:715.00px;font-size:13px;line-height:13px;color:#000;left:628.5px;width:600px;text-align:right;">-</div><div class="t" style="top:715.00px;font-size:13px;line-height:13px;color:#000;left:726.5px;width:600px;text-align:right;">-</div><div class="t" style="top:749.00px;font-size:13px;line-height:13px;color:#000;font-weight:bold;letter-spacing:0.08px;left:51px;">Net Cash Flow</div><div class="t" style="top:749.00px;font-size:13px;line-height:13px;color:#000;font-weight:bold;left:102.5px;width:600px;text-align:center;">LC</div><div class="t" style="top:749.00px;font-size:13px;line-height:13px;color:#000;letter-spacing:-0.25px;left:241px;width:600px;text-align:right;">(70,287)</div><div class="t" style="top:749.00px;font-size:13px;line-height:13px;color:#000;letter-spacing:-0.25px;left:334.5px;width:600px;text-align:right;">567,915</div><div class="t" style="top:749.00px;font-size:13px;line-height:13px;color:#000;letter-spacing:-0.25px;left:432.5px;width:600px;text-align:right;">554,704</div><div class="t" style="top:749.00px;font-size:13px;line-height:13px;color:#000;letter-spacing:-0.25px;left:530.5px;width:600px;text-align:right;">915,060</div><div class="t" style="top:749.00px;font-size:13px;line-height:13px;color:#000;letter-spacing:-0.25px;left:628.5px;width:600px;text-align:right;">997,530</div><div class="t" style="top:749.00px;font-size:13px;line-height:13px;color:#000;letter-spacing:-0.25px;left:726.5px;width:600px;text-align:right;">1,033,117</div><div class="t" style="top:766.00px;font-size:13px;line-height:13px;color:#000;left:62px;">Beginning Balance</div><div class="t" style="top:766.00px;font-size:13px;line-height:13px;color:#000;left:102.5px;width:600px;text-align:center;">LC</div><div class="t" style="top:766.00px;font-size:13px;line-height:13px;color:#000;letter-spacing:-0.25px;left:236.5px;width:600px;text-align:right;">80,287</div><div class="t" style="top:766.00px;font-size:13px;line-height:13px;color:#000;letter-spacing:-0.25px;left:334.5px;width:600px;text-align:right;">10,000</div><div class="t" style="top:766.00px;font-size:13px;line-height:13px;color:#000;letter-spacing:-0.25px;left:432.5px;width:600px;text-align:right;">577,915</div><div class="t" style="top:766.00px;font-size:13px;line-height:13px;color:#000;letter-spacing:-0.25px;left:530.5px;width:600px;text-align:right;">1,132,618</div><div class="t" style="top:766.00px;font-size:13px;line-height:13px;color:#000;letter-spacing:-0.25px;left:628.5px;width:600px;text-align:right;">2,047,678</div><div class="t" style="top:766.00px;font-size:13px;line-height:13px;color:#000;letter-spacing:-0.25px;left:726.5px;width:600px;text-align:right;">3,045,208</div><div class="t" style="top:783.00px;font-size:13px;line-height:13px;color:#000;font-weight:bold;letter-spacing:0.08px;left:51px;">Ending Balance</div><div class="t" style="top:783.00px;font-size:13px;line-height:13px;color:#000;font-weight:bold;left:102.5px;width:600px;text-align:center;">LC</div><div class="t" style="top:783.00px;font-size:13px;line-height:13px;color:#000;font-weight:bold;letter-spacing:-0.25px;left:236.5px;width:600px;text-align:right;">10,000</div><div class="t" style="top:783.00px;font-size:13px;line-height:13px;color:#000;font-weight:bold;letter-spacing:-0.25px;left:334.5px;width:600px;text-align:right;">577,915</div><div class="t" style="top:783.00px;font-size:13px;line-height:13px;color:#000;font-weight:bold;letter-spacing:-0.25px;left:432.5px;width:600px;text-align:right;">1,132,618</div><div class="t" style="top:783.00px;font-size:13px;line-height:13px;color:#000;font-weight:bold;letter-spacing:-0.25px;left:530.5px;width:600px;text-align:right;">2,047,678</div><div class="t" style="top:783.00px;font-size:13px;line-height:13px;color:#000;font-weight:bold;letter-spacing:-0.25px;left:628.5px;width:600px;text-align:right;">3,045,208</div><div class="t" style="top:783.00px;font-size:13px;line-height:13px;color:#000;font-weight:bold;letter-spacing:-0.25px;left:726.5px;width:600px;text-align:right;">4,078,325</div><div class="t" style="top:817.00px;font-size:13px;line-height:13px;color:#000;left:28px;">x</div><div class="t" style="top:817.00px;font-size:13px;line-height:13px;color:#000;font-weight:bold;letter-spacing:0.1px;left:51px;">4. Working Capital</div><div class="t" style="top:851.00px;font-size:13px;line-height:13px;color:#000;left:51px;">Days Payable Outstanding</div><div class="t" style="top:851.00px;font-size:13px;line-height:13px;color:#000;left:102.5px;width:600px;text-align:center;">Days</div><div class="t" style="top:851.00px;font-size:13px;line-height:13px;color:#000;letter-spacing:-0.25px;left:40.5px;width:600px;text-align:right;">0.1</div><div class="t" style="top:851.00px;font-size:13px;line-height:13px;color:#000;letter-spacing:-0.25px;left:138.5px;width:600px;text-align:right;">12.7</div><div class="t" style="top:851.00px;font-size:13px;line-height:13px;color:#22199a;letter-spacing:-0.25px;left:236.5px;width:600px;text-align:right;">5.0</div><div class="t" style="top:851.00px;font-size:13px;line-height:13px;color:#000;letter-spacing:-0.25px;left:334.5px;width:600px;text-align:right;">5.0</div><div class="t" style="top:851.00px;font-size:13px;line-height:13px;color:#000;letter-spacing:-0.25px;left:432.5px;width:600px;text-align:right;">5.0</div><div class="t" style="top:851.00px;font-size:13px;line-height:13px;color:#000;letter-spacing:-0.25px;left:530.5px;width:600px;text-align:right;">5.0</div><div class="t" style="top:851.00px;font-size:13px;line-height:13px;color:#000;letter-spacing:-0.25px;left:628.5px;width:600px;text-align:right;">5.0</div><div class="t" style="top:851.00px;font-size:13px;line-height:13px;color:#000;letter-spacing:-0.25px;left:726.5px;width:600px;text-align:right;">5.0</div><div class="t" style="top:868.00px;font-size:13px;line-height:13px;color:#000;left:51px;">Days Receivable Outstanding</div><div class="t" style="top:868.00px;font-size:13px;line-height:13px;color:#000;left:102.5px;width:600px;text-align:center;">Days</div><div class="t" style="top:868.00px;font-size:13px;line-height:13px;color:#000;letter-spacing:-0.25px;left:40.5px;width:600px;text-align:right;">36.7</div><div class="t" style="top:868.00px;font-size:13px;line-height:13px;color:#000;letter-spacing:-0.25px;left:138.5px;width:600px;text-align:right;">24.4</div><div class="t" style="top:868.00px;font-size:13px;line-height:13px;color:#22199a;letter-spacing:-0.25px;left:236.5px;width:600px;text-align:right;">21.0</div><div class="t" style="top:868.00px;font-size:13px;line-height:13px;color:#000;letter-spacing:-0.25px;left:334.5px;width:600px;text-align:right;">21.0</div><div class="t" style="top:868.00px;font-size:13px;line-height:13px;color:#000;letter-spacing:-0.25px;left:432.5px;width:600px;text-align:right;">21.0</div><div class="t" style="top:868.00px;font-size:13px;line-height:13px;color:#000;letter-spacing:-0.25px;left:530.5px;width:600px;text-align:right;">21.0</div><div class="t" style="top:868.00px;font-size:13px;line-height:13px;color:#000;letter-spacing:-0.25px;left:628.5px;width:600px;text-align:right;">21.0</div><div class="t" style="top:868.00px;font-size:13px;line-height:13px;color:#000;letter-spacing:-0.25px;left:726.5px;width:600px;text-align:right;">21.0</div><div class="t" style="top:885.00px;font-size:13px;line-height:13px;color:#000;font-weight:bold;letter-spacing:0.08px;left:51px;">Cash Conversion Cycle</div><div class="t" style="top:885.00px;font-size:13px;line-height:13px;color:#000;font-weight:bold;left:102.5px;width:600px;text-align:center;">Days</div><div class="t" style="top:885.00px;font-size:13px;line-height:13px;color:#000;font-weight:bold;letter-spacing:-0.25px;left:45px;width:600px;text-align:right;">(36.7)</div><div class="t" style="top:885.00px;font-size:13px;line-height:13px;color:#000;font-weight:bold;letter-spacing:-0.25px;left:143px;width:600px;text-align:right;">(11.7)</div><div class="t" style="top:885.00px;font-size:13px;line-height:13px;color:#000;font-weight:bold;letter-spacing:-0.25px;left:241px;width:600px;text-align:right;">(16.0)</div><div class="t" style="top:885.00px;font-size:13px;line-height:13px;color:#000;font-weight:bold;letter-spacing:-0.25px;left:339px;width:600px;text-align:right;">(16.0)</div><div class="t" style="top:885.00px;font-size:13px;line-height:13px;color:#000;font-weight:bold;letter-spacing:-0.25px;left:437px;width:600px;text-align:right;">(16.0)</div><div class="t" style="top:885.00px;font-size:13px;line-height:13px;color:#000;font-weight:bold;letter-spacing:-0.25px;left:535px;width:600px;text-align:right;">(16.0)</div><div class="t" style="top:885.00px;font-size:13px;line-height:13px;color:#000;font-weight:bold;letter-spacing:-0.25px;left:633px;width:600px;text-align:right;">(16.0)</div><div class="t" style="top:885.00px;font-size:13px;line-height:13px;color:#000;font-weight:bold;letter-spacing:-0.25px;left:731px;width:600px;text-align:right;">(16.0)</div><div class="t" style="top:919.00px;font-size:13px;line-height:13px;color:#000;font-weight:bold;letter-spacing:0.08px;left:51px;">Working Capital</div><div class="t" style="top:919.00px;font-size:13px;line-height:13px;color:#000;font-weight:bold;left:102.5px;width:600px;text-align:center;">PEN</div><div class="t" style="top:919.00px;font-size:13px;line-height:13px;color:#000;font-weight:bold;letter-spacing:-0.25px;left:45px;width:600px;text-align:right;">(40,415)</div><div class="t" style="top:919.00px;font-size:13px;line-height:13px;color:#000;font-weight:bold;letter-spacing:-0.25px;left:138.5px;width:600px;text-align:right;">2,239</div><div class="t" style="top:919.00px;font-size:13px;line-height:13px;color:#000;font-weight:bold;letter-spacing:-0.25px;left:241px;width:600px;text-align:right;">(7,030)</div><div class="t" style="top:919.00px;font-size:13px;line-height:13px;color:#000;font-weight:bold;letter-spacing:-0.25px;left:339px;width:600px;text-align:right;">(12,084)</div><div class="t" style="top:919.00px;font-size:13px;line-height:13px;color:#000;font-weight:bold;letter-spacing:-0.25px;left:437px;width:600px;text-align:right;">(13,405)</div><div class="t" style="top:919.00px;font-size:13px;line-height:13px;color:#000;font-weight:bold;letter-spacing:-0.25px;left:535px;width:600px;text-align:right;">(16,933)</div><div class="t" style="top:919.00px;font-size:13px;line-height:13px;color:#000;font-weight:bold;letter-spacing:-0.25px;left:633px;width:600px;text-align:right;">(17,489)</div><div class="t" style="top:919.00px;font-size:13px;line-height:13px;color:#000;font-weight:bold;letter-spacing:-0.25px;left:731px;width:600px;text-align:right;">(18,014)</div><div class="t" style="top:936.00px;font-size:13px;line-height:13px;color:#000;font-weight:bold;letter-spacing:0.08px;left:51px;">Change in Working Capital</div><div class="t" style="top:936.00px;font-size:13px;line-height:13px;color:#000;font-weight:bold;left:102.5px;width:600px;text-align:center;">PEN</div><div class="t" style="top:936.00px;font-size:13px;line-height:13px;color:#000;font-weight:bold;letter-spacing:-0.25px;left:143px;width:600px;text-align:right;">(42,654)</div><div class="t" style="top:936.00px;font-size:13px;line-height:13px;color:#000;font-weight:bold;letter-spacing:-0.25px;left:236.5px;width:600px;text-align:right;">9,269</div><div class="t" style="top:936.00px;font-size:13px;line-height:13px;color:#000;font-weight:bold;letter-spacing:-0.25px;left:334.5px;width:600px;text-align:right;">5,054</div><div class="t" style="top:936.00px;font-size:13px;line-height:13px;color:#000;font-weight:bold;letter-spacing:-0.25px;left:432.5px;width:600px;text-align:right;">1,321</div><div class="t" style="top:936.00px;font-size:13px;line-height:13px;color:#000;font-weight:bold;letter-spacing:-0.25px;left:530.5px;width:600px;text-align:right;">3,528</div><div class="t" style="top:936.00px;font-size:13px;line-height:13px;color:#000;font-weight:bold;letter-spacing:-0.25px;left:628.5px;width:600px;text-align:right;">556</div><div class="t" style="top:936.00px;font-size:13px;line-height:13px;color:#000;font-weight:bold;letter-spacing:-0.25px;left:726.5px;width:600px;text-align:right;">525</div><div class="t" style="top:970.00px;font-size:13px;line-height:13px;color:#000;left:28px;">x</div><div class="t" style="top:970.00px;font-size:13px;line-height:13px;color:#000;font-weight:bold;letter-spacing:0.1px;left:51px;">5. Balance Sheet Accounts Estimation</div><div class="t" style="top:1004.00px;font-size:13px;line-height:13px;color:#000;left:62px;">Accounts Receivables with Related Parties</div><div class="t" style="top:1004.00px;font-size:13px;line-height:13px;color:#000;letter-spacing:-0.2px;left:102.5px;width:600px;text-align:center;">% of Revenues</div><div class="t" style="top:1004.00px;font-size:13px;line-height:13px;color:#000;left:29.5px;width:600px;text-align:right;">–</div><div class="t" style="top:1004.00px;font-size:13px;line-height:13px;color:#000;letter-spacing:-0.25px;left:138.5px;width:600px;text-align:right;">0.3%</div><div class="t" style="top:1004.00px;font-size:13px;line-height:13px;color:#22199a;letter-spacing:-0.25px;left:236.5px;width:600px;text-align:right;">0.3%</div><div class="t" style="top:1004.00px;font-size:13px;line-height:13px;color:#000;letter-spacing:-0.25px;left:334.5px;width:600px;text-align:right;">0.3%</div><div class="t" style="top:1004.00px;font-size:13px;line-height:13px;color:#000;letter-spacing:-0.25px;left:432.5px;width:600px;text-align:right;">0.3%</div><div class="t" style="top:1004.00px;font-size:13px;line-height:13px;color:#000;letter-spacing:-0.25px;left:530.5px;width:600px;text-align:right;">0.3%</div><div class="t" style="top:1004.00px;font-size:13px;line-height:13px;color:#000;letter-spacing:-0.25px;left:628.5px;width:600px;text-align:right;">0.3%</div><div class="t" style="top:1004.00px;font-size:13px;line-height:13px;color:#000;letter-spacing:-0.25px;left:726.5px;width:600px;text-align:right;">0.3%</div><div class="t" style="top:1021.00px;font-size:13px;line-height:13px;color:#000;left:62px;">Prepaid Services</div><div class="t" style="top:1021.00px;font-size:13px;line-height:13px;color:#000;letter-spacing:-0.2px;left:102.5px;width:600px;text-align:center;">% of Revenues</div><div class="t" style="top:1021.00px;font-size:13px;line-height:13px;color:#000;letter-spacing:-0.25px;left:40.5px;width:600px;text-align:right;">0.2%</div><div class="t" style="top:1021.00px;font-size:13px;line-height:13px;color:#000;letter-spacing:-0.25px;left:138.5px;width:600px;text-align:right;">0.2%</div><div class="t" style="top:1021.00px;font-size:13px;line-height:13px;color:#22199a;letter-spacing:-0.25px;left:236.5px;width:600px;text-align:right;">0.2%</div><div class="t" style="top:1021.00px;font-size:13px;line-height:13px;color:#000;letter-spacing:-0.25px;left:334.5px;width:600px;text-align:right;">0.2%</div><div class="t" style="top:1021.00px;font-size:13px;line-height:13px;color:#000;letter-spacing:-0.25px;left:432.5px;width:600px;text-align:right;">0.2%</div><div class="t" style="top:1021.00px;font-size:13px;line-height:13px;color:#000;letter-spacing:-0.25px;left:530.5px;width:600px;text-align:right;">0.2%</div><div class="t" style="top:1021.00px;font-size:13px;line-height:13px;color:#000;letter-spacing:-0.25px;left:628.5px;width:600px;text-align:right;">0.2%</div><div class="t" style="top:1021.00px;font-size:13px;line-height:13px;color:#000;letter-spacing:-0.25px;left:726.5px;width:600px;text-align:right;">0.2%</div><div class="t" style="top:1038.00px;font-size:13px;line-height:13px;color:#000;left:62px;">Other Current Assets</div><div class="t" style="top:1038.00px;font-size:13px;line-height:13px;color:#000;letter-spacing:-0.2px;left:102.5px;width:600px;text-align:center;">% of Revenues</div><div class="t" style="top:1038.00px;font-size:13px;line-height:13px;color:#000;letter-spacing:-0.25px;left:40.5px;width:600px;text-align:right;">1.5%</div><div class="t" style="top:1038.00px;font-size:13px;line-height:13px;color:#000;letter-spacing:-0.25px;left:138.5px;width:600px;text-align:right;">3.0%</div><div class="t" style="top:1038.00px;font-size:13px;line-height:13px;color:#22199a;letter-spacing:-0.25px;left:236.5px;width:600px;text-align:right;">3.0%</div><div class="t" style="top:1038.00px;font-size:13px;line-height:13px;color:#000;letter-spacing:-0.25px;left:334.5px;width:600px;text-align:right;">3.0%</div><div class="t" style="top:1038.00px;font-size:13px;line-height:13px;color:#000;letter-spacing:-0.25px;left:432.5px;width:600px;text-align:right;">3.0%</div><div class="t" style="top:1038.00px;font-size:13px;line-height:13px;color:#000;letter-spacing:-0.25px;left:530.5px;width:600px;text-align:right;">3.0%</div><div class="t" style="top:1038.00px;font-size:13px;line-height:13px;color:#000;letter-spacing:-0.25px;left:628.5px;width:600px;text-align:right;">3.0%</div><div class="t" style="top:1038.00px;font-size:13px;line-height:13px;color:#000;letter-spacing:-0.25px;left:726.5px;width:600px;text-align:right;">3.0%</div><div class="t" style="top:1055.00px;font-size:13px;line-height:13px;color:#000;left:62px;">Other Non-Current Assets</div><div class="t" style="top:1055.00px;font-size:13px;line-height:13px;color:#000;letter-spacing:-0.2px;left:102.5px;width:600px;text-align:center;">% of Revenues</div><div class="t" style="top:1055.00px;font-size:13px;line-height:13px;color:#000;left:29.5px;width:600px;text-align:right;">–</div><div class="t" style="top:1055.00px;font-size:13px;line-height:13px;color:#000;left:127.5px;width:600px;text-align:right;">–</div><div class="t" style="top:1055.00px;font-size:13px;line-height:13px;color:#22199a;left:225.5px;width:600px;text-align:right;">–</div><div class="t" style="top:1055.00px;font-size:13px;line-height:13px;color:#000;left:323.5px;width:600px;text-align:right;">–</div><div class="t" style="top:1055.00px;font-size:13px;line-height:13px;color:#000;left:421.5px;width:600px;text-align:right;">–</div><div class="t" style="top:1055.00px;font-size:13px;line-height:13px;color:#000;left:519.5px;width:600px;text-align:right;">–</div><div class="t" style="top:1055.00px;font-size:13px;line-height:13px;color:#000;left:617.5px;width:600px;text-align:right;">–</div><div class="t" style="top:1055.00px;font-size:13px;line-height:13px;color:#000;left:715.5px;width:600px;text-align:right;">–</div><div class="t" style="top:1072.00px;font-size:13px;line-height:13px;color:#000;left:62px;">Taxes Payable</div><div class="t" style="top:1072.00px;font-size:13px;line-height:13px;color:#000;letter-spacing:-0.2px;left:102.5px;width:600px;text-align:center;">% of Revenues</div><div class="t" style="top:1072.00px;font-size:13px;line-height:13px;color:#000;letter-spacing:-0.25px;left:40.5px;width:600px;text-align:right;">2.5%</div><div class="t" style="top:1072.00px;font-size:13px;line-height:13px;color:#000;letter-spacing:-0.25px;left:138.5px;width:600px;text-align:right;">1.1%</div><div class="t" style="top:1072.00px;font-size:13px;line-height:13px;color:#22199a;letter-spacing:-0.25px;left:236.5px;width:600px;text-align:right;">1.1%</div><div class="t" style="top:1072.00px;font-size:13px;line-height:13px;color:#000;letter-spacing:-0.25px;left:334.5px;width:600px;text-align:right;">1.1%</div><div class="t" style="top:1072.00px;font-size:13px;line-height:13px;color:#000;letter-spacing:-0.25px;left:432.5px;width:600px;text-align:right;">1.1%</div><div class="t" style="top:1072.00px;font-size:13px;line-height:13px;color:#000;letter-spacing:-0.25px;left:530.5px;width:600px;text-align:right;">1.1%</div><div class="t" style="top:1072.00px;font-size:13px;line-height:13px;color:#000;letter-spacing:-0.25px;left:628.5px;width:600px;text-align:right;">1.1%</div><div class="t" style="top:1072.00px;font-size:13px;line-height:13px;color:#000;letter-spacing:-0.25px;left:726.5px;width:600px;text-align:right;">1.1%</div><div class="t" style="top:1089.00px;font-size:13px;line-height:13px;color:#000;left:62px;">Wages Payable</div><div class="t" style="top:1089.00px;font-size:13px;line-height:13px;color:#000;letter-spacing:-0.2px;left:102.5px;width:600px;text-align:center;">% of Revenues</div><div class="t" style="top:1089.00px;font-size:13px;line-height:13px;color:#000;letter-spacing:-0.25px;left:40.5px;width:600px;text-align:right;">0.5%</div><div class="t" style="top:1089.00px;font-size:13px;line-height:13px;color:#000;letter-spacing:-0.25px;left:138.5px;width:600px;text-align:right;">1.1%</div><div class="t" style="top:1089.00px;font-size:13px;line-height:13px;color:#22199a;letter-spacing:-0.25px;left:236.5px;width:600px;text-align:right;">1.1%</div><div class="t" style="top:1089.00px;font-size:13px;line-height:13px;color:#000;letter-spacing:-0.25px;left:334.5px;width:600px;text-align:right;">1.1%</div><div class="t" style="top:1089.00px;font-size:13px;line-height:13px;color:#000;letter-spacing:-0.25px;left:432.5px;width:600px;text-align:right;">1.1%</div><div class="t" style="top:1089.00px;font-size:13px;line-height:13px;color:#000;letter-spacing:-0.25px;left:530.5px;width:600px;text-align:right;">1.1%</div><div class="t" style="top:1089.00px;font-size:13px;line-height:13px;color:#000;letter-spacing:-0.25px;left:628.5px;width:600px;text-align:right;">1.1%</div><div class="t" style="top:1089.00px;font-size:13px;line-height:13px;color:#000;letter-spacing:-0.25px;left:726.5px;width:600px;text-align:right;">1.1%</div><div class="t" style="top:1106.00px;font-size:13px;line-height:13px;color:#000;left:62px;">Accounts Payable Related Parties</div><div class="t" style="top:1106.00px;font-size:13px;line-height:13px;color:#000;letter-spacing:-0.2px;left:102.5px;width:600px;text-align:center;">% of Revenues</div><div class="t" style="top:1106.00px;font-size:13px;line-height:13px;color:#000;letter-spacing:-0.25px;left:40.5px;width:600px;text-align:right;">41.7%</div><div class="t" style="top:1106.00px;font-size:13px;line-height:13px;color:#000;letter-spacing:-0.25px;left:138.5px;width:600px;text-align:right;">50.6%</div><div class="t" style="top:1106.00px;font-size:13px;line-height:13px;color:#22199a;letter-spacing:-0.25px;left:236.5px;width:600px;text-align:right;">50.6%</div><div class="t" style="top:1106.00px;font-size:13px;line-height:13px;color:#000;letter-spacing:-0.25px;left:334.5px;width:600px;text-align:right;">50.6%</div><div class="t" style="top:1106.00px;font-size:13px;line-height:13px;color:#000;letter-spacing:-0.25px;left:432.5px;width:600px;text-align:right;">50.6%</div><div class="t" style="top:1106.00px;font-size:13px;line-height:13px;color:#000;letter-spacing:-0.25px;left:530.5px;width:600px;text-align:right;">50.6%</div><div class="t" style="top:1106.00px;font-size:13px;line-height:13px;color:#000;letter-spacing:-0.25px;left:628.5px;width:600px;text-align:right;">50.6%</div><div class="t" style="top:1106.00px;font-size:13px;line-height:13px;color:#000;letter-spacing:-0.25px;left:726.5px;width:600px;text-align:right;">50.6%</div><div class="t" style="top:1123.00px;font-size:13px;line-height:13px;color:#000;left:62px;">Other Accounts Payable</div><div class="t" style="top:1123.00px;font-size:13px;line-height:13px;color:#000;letter-spacing:-0.2px;left:102.5px;width:600px;text-align:center;">% of Revenues</div><div class="t" style="top:1123.00px;font-size:13px;line-height:13px;color:#000;letter-spacing:-0.25px;left:40.5px;width:600px;text-align:right;">12.7%</div><div class="t" style="top:1123.00px;font-size:13px;line-height:13px;color:#000;letter-spacing:-0.25px;left:138.5px;width:600px;text-align:right;">3.5%</div><div class="t" style="top:1123.00px;font-size:13px;line-height:13px;color:#22199a;letter-spacing:-0.25px;left:236.5px;width:600px;text-align:right;">3.5%</div><div class="t" style="top:1123.00px;font-size:13px;line-height:13px;color:#000;letter-spacing:-0.25px;left:334.5px;width:600px;text-align:right;">3.5%</div><div class="t" style="top:1123.00px;font-size:13px;line-height:13px;color:#000;letter-spacing:-0.25px;left:432.5px;width:600px;text-align:right;">3.5%</div><div class="t" style="top:1123.00px;font-size:13px;line-height:13px;color:#000;letter-spacing:-0.25px;left:530.5px;width:600px;text-align:right;">3.5%</div><div class="t" style="top:1123.00px;font-size:13px;line-height:13px;color:#000;letter-spacing:-0.25px;left:628.5px;width:600px;text-align:right;">3.5%</div><div class="t" style="top:1123.00px;font-size:13px;line-height:13px;color:#000;letter-spacing:-0.25px;left:726.5px;width:600px;text-align:right;">3.5%</div><div class="t" style="top:1157.00px;font-size:13px;line-height:13px;color:#000;left:28px;">x</div><div class="t" style="top:1157.00px;font-size:13px;line-height:13px;color:#000;font-weight:bold;letter-spacing:0.1px;left:51px;">6. Capex and Depreciation</div><div class="t" style="top:1191.00px;font-size:13px;line-height:13px;color:#000;left:28px;">x</div><div class="t" style="top:1191.00px;font-size:13px;line-height:13px;color:#000;font-weight:bold;letter-spacing:0.08px;left:51px;">Property, Plant and Equipment</div><div class="t" style="top:1208.00px;font-size:13px;line-height:13px;color:#000;left:62px;">Beginning Balance</div><div class="t" style="top:1208.00px;font-size:13px;line-height:13px;color:#000;left:102.5px;width:600px;text-align:center;">LC</div><div class="t" style="top:1208.00px;font-size:13px;line-height:13px;color:#000;left:40.5px;width:600px;text-align:right;">-</div><div class="t" style="top:1208.00px;font-size:13px;line-height:13px;color:#000;letter-spacing:-0.25px;left:138.5px;width:600px;text-align:right;">179,855</div><div class="t" style="top:1208.00px;font-size:13px;line-height:13px;color:#000;letter-spacing:-0.25px;left:236.5px;width:600px;text-align:right;">480,390</div><div class="t" style="top:1208.00px;font-size:13px;line-height:13px;color:#000;letter-spacing:-0.25px;left:334.5px;width:600px;text-align:right;">481,795</div><div class="t" style="top:1208.00px;font-size:13px;line-height:13px;color:#000;letter-spacing:-0.25px;left:432.5px;width:600px;text-align:right;">506,639</div><div class="t" style="top:1208.00px;font-size:13px;line-height:13px;color:#000;letter-spacing:-0.25px;left:530.5px;width:600px;text-align:right;">532,310</div><div class="t" style="top:1208.00px;font-size:13px;line-height:13px;color:#000;letter-spacing:-0.25px;left:628.5px;width:600px;text-align:right;">570,358</div><div class="t" style="top:1208.00px;font-size:13px;line-height:13px;color:#000;letter-spacing:-0.25px;left:726.5px;width:600px;text-align:right;">602,292</div><div class="t" style="top:1225.00px;font-size:13px;line-height:13px;color:#000;left:62px;">Additions</div><div class="t" style="top:1225.00px;font-size:13px;line-height:13px;color:#000;left:102.5px;width:600px;text-align:center;">LC</div><div class="t" style="top:1225.00px;font-size:13px;line-height:13px;color:#22199a;letter-spacing:-0.25px;left:40.5px;width:600px;text-align:right;">190,050</div><div class="t" style="top:1225.00px;font-size:13px;line-height:13px;color:#22199a;letter-spacing:-0.25px;left:138.5px;width:600px;text-align:right;">329,388</div><div class="t" style="top:1225.00px;font-size:13px;line-height:13px;color:#000;letter-spacing:-0.25px;left:236.5px;width:600px;text-align:right;">34,344</div><div class="t" style="top:1225.00px;font-size:13px;line-height:13px;color:#000;letter-spacing:-0.25px;left:334.5px;width:600px;text-align:right;">61,217</div><div class="t" style="top:1225.00px;font-size:13px;line-height:13px;color:#000;letter-spacing:-0.25px;left:432.5px;width:600px;text-align:right;">68,166</div><div class="t" style="top:1225.00px;font-size:13px;line-height:13px;color:#000;letter-spacing:-0.25px;left:530.5px;width:600px;text-align:right;">87,360</div><div class="t" style="top:1225.00px;font-size:13px;line-height:13px;color:#000;letter-spacing:-0.25px;left:628.5px;width:600px;text-align:right;">89,981</div><div class="t" style="top:1225.00px;font-size:13px;line-height:13px;color:#000;letter-spacing:-0.25px;left:726.5px;width:600px;text-align:right;">92,680</div><div class="t" style="top:1242.00px;font-size:13px;line-height:13px;color:#000;left:62px;">Substractions</div><div class="t" style="top:1242.00px;font-size:13px;line-height:13px;color:#000;left:102.5px;width:600px;text-align:center;">LC</div><div class="t" style="top:1242.00px;font-size:13px;line-height:13px;color:#22199a;letter-spacing:-0.25px;left:45px;width:600px;text-align:right;">(10,195)</div><div class="t" style="top:1242.00px;font-size:13px;line-height:13px;color:#22199a;letter-spacing:-0.25px;left:143px;width:600px;text-align:right;">(28,853)</div><div class="t" style="top:1242.00px;font-size:13px;line-height:13px;color:#000;letter-spacing:-0.25px;left:241px;width:600px;text-align:right;">(32,939)</div><div class="t" style="top:1242.00px;font-size:13px;line-height:13px;color:#000;letter-spacing:-0.25px;left:339px;width:600px;text-align:right;">(36,373)</div><div class="t" style="top:1242.00px;font-size:13px;line-height:13px;color:#000;letter-spacing:-0.25px;left:437px;width:600px;text-align:right;">(42,495)</div><div class="t" style="top:1242.00px;font-size:13px;line-height:13px;color:#000;letter-spacing:-0.25px;left:535px;width:600px;text-align:right;">(49,311)</div><div class="t" style="top:1242.00px;font-size:13px;line-height:13px;color:#000;letter-spacing:-0.25px;left:633px;width:600px;text-align:right;">(58,047)</div><div class="t" style="top:1242.00px;font-size:13px;line-height:13px;color:#000;letter-spacing:-0.25px;left:731px;width:600px;text-align:right;">(67,046)</div><div class="t" style="top:1259.00px;font-size:13px;line-height:13px;color:#000;left:62px;">Ending Balance</div><div class="t" style="top:1259.00px;font-size:13px;line-height:13px;color:#000;left:102.5px;width:600px;text-align:center;">LC</div><div class="t" style="top:1259.00px;font-size:13px;line-height:13px;color:#000;letter-spacing:-0.25px;left:40.5px;width:600px;text-align:right;">179,855</div><div class="t" style="top:1259.00px;font-size:13px;line-height:13px;color:#000;letter-spacing:-0.25px;left:138.5px;width:600px;text-align:right;">480,390</div><div class="t" style="top:1259.00px;font-size:13px;line-height:13px;color:#000;letter-spacing:-0.25px;left:236.5px;width:600px;text-align:right;">481,795</div><div class="t" style="top:1259.00px;font-size:13px;line-height:13px;color:#000;letter-spacing:-0.25px;left:334.5px;width:600px;text-align:right;">506,639</div><div class="t" style="top:1259.00px;font-size:13px;line-height:13px;color:#000;letter-spacing:-0.25px;left:432.5px;width:600px;text-align:right;">532,310</div><div class="t" style="top:1259.00px;font-size:13px;line-height:13px;color:#000;letter-spacing:-0.25px;left:530.5px;width:600px;text-align:right;">570,358</div><div class="t" style="top:1259.00px;font-size:13px;line-height:13px;color:#000;letter-spacing:-0.25px;left:628.5px;width:600px;text-align:right;">602,292</div><div class="t" style="top:1259.00px;font-size:13px;line-height:13px;color:#000;letter-spacing:-0.25px;left:726.5px;width:600px;text-align:right;">627,927</div><div class="t" style="top:1293.00px;font-size:13px;line-height:13px;color:#000;left:28px;">x</div><div class="t" style="top:1293.00px;font-size:13px;line-height:13px;color:#000;font-weight:bold;letter-spacing:0.08px;left:51px;">Capex</div><div class="t" style="top:1310.00px;font-size:13px;line-height:13px;color:#000;left:62px;">Expansion Capex</div><div class="t" style="top:1310.00px;font-size:13px;line-height:13px;color:#000;left:102.5px;width:600px;text-align:center;">LC</div><div class="t" style="top:1310.00px;font-size:13px;line-height:13px;color:#000;letter-spacing:-0.25px;left:40.5px;width:600px;text-align:right;">190,050</div><div class="t" style="top:1310.00px;font-size:13px;line-height:13px;color:#000;letter-spacing:-0.25px;left:138.5px;width:600px;text-align:right;">329,388</div><div class="t" style="top:1310.00px;font-size:13px;line-height:13px;color:#22199a;left:236.5px;width:600px;text-align:right;">-</div><div class="t" style="top:1310.00px;font-size:13px;line-height:13px;color:#22199a;left:334.5px;width:600px;text-align:right;">-</div><div class="t" style="top:1310.00px;font-size:13px;line-height:13px;color:#22199a;left:432.5px;width:600px;text-align:right;">-</div><div class="t" style="top:1310.00px;font-size:13px;line-height:13px;color:#22199a;left:530.5px;width:600px;text-align:right;">-</div><div class="t" style="top:1310.00px;font-size:13px;line-height:13px;color:#22199a;left:628.5px;width:600px;text-align:right;">-</div><div class="t" style="top:1310.00px;font-size:13px;line-height:13px;color:#22199a;left:726.5px;width:600px;text-align:right;">-</div><div class="t" style="top:1310.00px;font-size:13px;line-height:13px;color:#000;font-weight:bold;left:-57px;width:600px;text-align:right;">Capex % Rev.</div><div class="t" style="top:1327.00px;font-size:13px;line-height:13px;color:#000;left:62px;">Renovation Capex</div><div class="t" style="top:1327.00px;font-size:13px;line-height:13px;color:#000;left:102.5px;width:600px;text-align:center;">LC</div><div class="t" style="top:1327.00px;font-size:13px;line-height:13px;color:#000;left:40.5px;width:600px;text-align:right;">-</div><div class="t" style="top:1327.00px;font-size:13px;line-height:13px;color:#000;left:138.5px;width:600px;text-align:right;">-</div><div class="t" style="top:1327.00px;font-size:13px;line-height:13px;color:#000;letter-spacing:-0.25px;left:236.5px;width:600px;text-align:right;">34,344</div><div class="t" style="top:1327.00px;font-size:13px;line-height:13px;color:#000;letter-spacing:-0.25px;left:334.5px;width:600px;text-align:right;">61,217</div><div class="t" style="top:1327.00px;font-size:13px;line-height:13px;color:#000;letter-spacing:-0.25px;left:432.5px;width:600px;text-align:right;">68,166</div><div class="t" style="top:1327.00px;font-size:13px;line-height:13px;color:#000;letter-spacing:-0.25px;left:530.5px;width:600px;text-align:right;">87,360</div><div class="t" style="top:1327.00px;font-size:13px;line-height:13px;color:#000;letter-spacing:-0.25px;left:628.5px;width:600px;text-align:right;">89,981</div><div class="t" style="top:1327.00px;font-size:13px;line-height:13px;color:#000;letter-spacing:-0.25px;left:726.5px;width:600px;text-align:right;">92,680</div><div class="t" style="top:1327.00px;font-size:13px;line-height:13px;color:#22199a;left:-58px;width:600px;text-align:right;">2.0%</div><div class="t" style="top:1344.00px;font-size:13px;line-height:13px;color:#000;font-weight:bold;letter-spacing:0.08px;left:51px;">Total Capex</div><div class="t" style="top:1344.00px;font-size:13px;line-height:13px;color:#000;font-weight:bold;left:102.5px;width:600px;text-align:center;">LC</div><div class="t" style="top:1344.00px;font-size:13px;line-height:13px;color:#000;font-weight:bold;letter-spacing:-0.25px;left:40.5px;width:600px;text-align:right;">190,050</div><div class="t" style="top:1344.00px;font-size:13px;line-height:13px;color:#000;font-weight:bold;letter-spacing:-0.25px;left:138.5px;width:600px;text-align:right;">329,388</div><div class="t" style="top:1344.00px;font-size:13px;line-height:13px;color:#000;font-weight:bold;letter-spacing:-0.25px;left:236.5px;width:600px;text-align:right;">34,344</div><div class="t" style="top:1344.00px;font-size:13px;line-height:13px;color:#000;font-weight:bold;letter-spacing:-0.25px;left:334.5px;width:600px;text-align:right;">61,217</div><div class="t" style="top:1344.00px;font-size:13px;line-height:13px;color:#000;font-weight:bold;letter-spacing:-0.25px;left:432.5px;width:600px;text-align:right;">68,166</div><div class="t" style="top:1344.00px;font-size:13px;line-height:13px;color:#000;font-weight:bold;letter-spacing:-0.25px;left:530.5px;width:600px;text-align:right;">87,360</div><div class="t" style="top:1344.00px;font-size:13px;line-height:13px;color:#000;font-weight:bold;letter-spacing:-0.25px;left:628.5px;width:600px;text-align:right;">89,981</div><div class="t" style="top:1344.00px;font-size:13px;line-height:13px;color:#000;font-weight:bold;letter-spacing:-0.25px;left:726.5px;width:600px;text-align:right;">92,680</div><div class="t" style="top:271.65px;font-size:14px;line-height:14px;color:#3c3c3c;left:-263.5px;width:600px;text-align:center;">A</div><div class="r" style="left:48px;top:272px;width:1px;height:15px;background:#dcdcdc"></div><div class="t" style="top:271.65px;font-size:14px;line-height:14px;color:#3c3c3c;left:-99.5px;width:600px;text-align:center;">B</div><div class="r" style="left:353px;top:272px;width:1px;height:15px;background:#dcdcdc"></div><div class="t" style="top:271.65px;font-size:14px;line-height:14px;color:#3c3c3c;left:102.0px;width:600px;text-align:center;">C</div><div class="r" style="left:451px;top:272px;width:1px;height:15px;background:#dcdcdc"></div><div class="t" style="top:271.65px;font-size:14px;line-height:14px;color:#3c3c3c;left:200.0px;width:600px;text-align:center;">D</div><div class="r" style="left:549px;top:272px;width:1px;height:15px;background:#dcdcdc"></div><div class="t" style="top:271.65px;font-size:14px;line-height:14px;color:#3c3c3c;left:298.0px;width:600px;text-align:center;">E</div><div class="r" style="left:647px;top:272px;width:1px;height:15px;background:#dcdcdc"></div><div class="t" style="top:271.65px;font-size:14px;line-height:14px;color:#3c3c3c;left:396.0px;width:600px;text-align:center;">F</div><div class="r" style="left:745px;top:272px;width:1px;height:15px;background:#dcdcdc"></div><div class="t" style="top:271.65px;font-size:14px;line-height:14px;color:#3c3c3c;left:494.0px;width:600px;text-align:center;">G</div><div class="r" style="left:843px;top:272px;width:1px;height:15px;background:#dcdcdc"></div><div class="t" style="top:271.65px;font-size:14px;line-height:14px;color:#3c3c3c;left:592.0px;width:600px;text-align:center;">H</div><div class="r" style="left:941px;top:272px;width:1px;height:15px;background:#dcdcdc"></div><div class="t" style="top:271.65px;font-size:14px;line-height:14px;color:#3c3c3c;left:690.0px;width:600px;text-align:center;">I</div><div class="r" style="left:1039px;top:272px;width:1px;height:15px;background:#dcdcdc"></div><div class="t" style="top:271.65px;font-size:14px;line-height:14px;color:#3c3c3c;left:788.0px;width:600px;text-align:center;">J</div><div class="r" style="left:1137px;top:272px;width:1px;height:15px;background:#dcdcdc"></div><div class="t" style="top:271.65px;font-size:14px;line-height:14px;color:#3c3c3c;left:886.0px;width:600px;text-align:center;">K</div><div class="r" style="left:1235px;top:272px;width:1px;height:15px;background:#dcdcdc"></div><div class="t" style="top:271.65px;font-size:14px;line-height:14px;color:#3c3c3c;left:984.0px;width:600px;text-align:center;">L</div><div class="r" style="left:1333px;top:272px;width:1px;height:15px;background:#dcdcdc"></div><div class="t" style="top:271.65px;font-size:14px;line-height:14px;color:#3c3c3c;left:1047.0px;width:600px;text-align:center;">M</div><div class="r" style="left:1361px;top:272px;width:1px;height:15px;background:#dcdcdc"></div><div class="r" style="left:0px;top:285px;width:25px;height:1px;background:#c8c8c8;"></div><div class="r" style="left:25px;top:270px;width:1px;height:1107px;background:#c8c8c8;"></div><div class="t" style="top:289.42px;font-size:12.5px;line-height:12.5px;color:#333;left:-287.2px;width:600px;text-align:center;">1</div><div class="r" style="left:0px;top:302px;width:25px;height:1px;background:#e0e0e0;"></div><div class="t" style="top:306.42px;font-size:12.5px;line-height:12.5px;color:#333;left:-287.2px;width:600px;text-align:center;">2</div><div class="r" style="left:0px;top:319px;width:25px;height:1px;background:#e0e0e0;"></div><div class="t" style="top:323.42px;font-size:12.5px;line-height:12.5px;color:#333;left:-287.2px;width:600px;text-align:center;">3</div><div class="r" style="left:0px;top:336px;width:25px;height:1px;background:#e0e0e0;"></div><div class="t" style="top:340.42px;font-size:12.5px;line-height:12.5px;color:#333;left:-287.2px;width:600px;text-align:center;">4</div><div class="r" style="left:0px;top:353px;width:25px;height:1px;background:#e0e0e0;"></div><div class="t" style="top:357.42px;font-size:12.5px;line-height:12.5px;color:#333;left:-287.2px;width:600px;text-align:center;">5</div><div class="r" style="left:0px;top:370px;width:25px;height:1px;background:#e0e0e0;"></div><div class="t" style="top:374.42px;font-size:12.5px;line-height:12.5px;color:#333;left:-287.2px;width:600px;text-align:center;">6</div><div class="r" style="left:0px;top:387px;width:25px;height:1px;background:#e0e0e0;"></div><div class="t" style="top:391.42px;font-size:12.5px;line-height:12.5px;color:#333;left:-287.2px;width:600px;text-align:center;">7</div><div class="r" style="left:0px;top:404px;width:25px;height:1px;background:#e0e0e0;"></div><div class="t" style="top:408.42px;font-size:12.5px;line-height:12.5px;color:#333;left:-287.2px;width:600px;text-align:center;">8</div><div class="r" style="left:0px;top:421px;width:25px;height:1px;background:#e0e0e0;"></div><div class="t" style="top:425.42px;font-size:12.5px;line-height:12.5px;color:#333;left:-287.2px;width:600px;text-align:center;">9</div><div class="r" style="left:0px;top:438px;width:25px;height:1px;background:#e0e0e0;"></div><div class="t" style="top:442.42px;font-size:12.5px;line-height:12.5px;color:#333;left:-287.2px;width:600px;text-align:center;">10</div><div class="r" style="left:0px;top:455px;width:25px;height:1px;background:#e0e0e0;"></div><div class="t" style="top:460.42px;font-size:12.5px;line-height:12.5px;color:#333;left:-287.2px;width:600px;text-align:center;">67</div><div class="r" style="left:0px;top:473px;width:25px;height:1px;background:#e0e0e0;"></div><div class="t" style="top:477.42px;font-size:12.5px;line-height:12.5px;color:#333;left:-287.2px;width:600px;text-align:center;">68</div><div class="r" style="left:0px;top:490px;width:25px;height:1px;background:#e0e0e0;"></div><div class="t" style="top:494.42px;font-size:12.5px;line-height:12.5px;color:#333;left:-287.2px;width:600px;text-align:center;">69</div><div class="r" style="left:0px;top:507px;width:25px;height:1px;background:#e0e0e0;"></div><div class="t" style="top:511.42px;font-size:12.5px;line-height:12.5px;color:#333;left:-287.2px;width:600px;text-align:center;">70</div><div class="r" style="left:0px;top:524px;width:25px;height:1px;background:#e0e0e0;"></div><div class="t" style="top:528.42px;font-size:12.5px;line-height:12.5px;color:#333;left:-287.2px;width:600px;text-align:center;">71</div><div class="r" style="left:0px;top:541px;width:25px;height:1px;background:#e0e0e0;"></div><div class="t" style="top:545.42px;font-size:12.5px;line-height:12.5px;color:#333;left:-287.2px;width:600px;text-align:center;">72</div><div class="r" style="left:0px;top:558px;width:25px;height:1px;background:#e0e0e0;"></div><div class="t" style="top:562.42px;font-size:12.5px;line-height:12.5px;color:#333;left:-287.2px;width:600px;text-align:center;">73</div><div class="r" style="left:0px;top:575px;width:25px;height:1px;background:#e0e0e0;"></div><div class="t" style="top:579.42px;font-size:12.5px;line-height:12.5px;color:#333;left:-287.2px;width:600px;text-align:center;">74</div><div class="r" style="left:0px;top:592px;width:25px;height:1px;background:#e0e0e0;"></div><div class="t" style="top:596.42px;font-size:12.5px;line-height:12.5px;color:#333;left:-287.2px;width:600px;text-align:center;">75</div><div class="r" style="left:0px;top:609px;width:25px;height:1px;background:#e0e0e0;"></div><div class="t" style="top:613.42px;font-size:12.5px;line-height:12.5px;color:#333;left:-287.2px;width:600px;text-align:center;">76</div><div class="r" style="left:0px;top:626px;width:25px;height:1px;background:#e0e0e0;"></div><div class="t" style="top:630.42px;font-size:12.5px;line-height:12.5px;color:#333;left:-287.2px;width:600px;text-align:center;">77</div><div class="r" style="left:0px;top:643px;width:25px;height:1px;background:#e0e0e0;"></div><div class="t" style="top:647.42px;font-size:12.5px;line-height:12.5px;color:#333;left:-287.2px;width:600px;text-align:center;">78</div><div class="r" style="left:0px;top:660px;width:25px;height:1px;background:#e0e0e0;"></div><div class="t" style="top:664.42px;font-size:12.5px;line-height:12.5px;color:#333;left:-287.2px;width:600px;text-align:center;">79</div><div class="r" style="left:0px;top:677px;width:25px;height:1px;background:#e0e0e0;"></div><div class="t" style="top:681.42px;font-size:12.5px;line-height:12.5px;color:#333;left:-287.2px;width:600px;text-align:center;">80</div><div class="r" style="left:0px;top:694px;width:25px;height:1px;background:#e0e0e0;"></div><div class="t" style="top:698.42px;font-size:12.5px;line-height:12.5px;color:#333;left:-287.2px;width:600px;text-align:center;">81</div><div class="r" style="left:0px;top:711px;width:25px;height:1px;background:#e0e0e0;"></div><div class="t" style="top:715.42px;font-size:12.5px;line-height:12.5px;color:#333;left:-287.2px;width:600px;text-align:center;">82</div><div class="r" style="left:0px;top:728px;width:25px;height:1px;background:#e0e0e0;"></div><div class="t" style="top:732.42px;font-size:12.5px;line-height:12.5px;color:#333;left:-287.2px;width:600px;text-align:center;">83</div><div class="r" style="left:0px;top:745px;width:25px;height:1px;background:#e0e0e0;"></div><div class="t" style="top:749.42px;font-size:12.5px;line-height:12.5px;color:#333;left:-287.2px;width:600px;text-align:center;">84</div><div class="r" style="left:0px;top:762px;width:25px;height:1px;background:#e0e0e0;"></div><div class="t" style="top:766.42px;font-size:12.5px;line-height:12.5px;color:#333;left:-287.2px;width:600px;text-align:center;">85</div><div class="r" style="left:0px;top:779px;width:25px;height:1px;background:#e0e0e0;"></div><div class="t" style="top:783.42px;font-size:12.5px;line-height:12.5px;color:#333;left:-287.2px;width:600px;text-align:center;">86</div><div class="r" style="left:0px;top:796px;width:25px;height:1px;background:#e0e0e0;"></div><div class="t" style="top:800.42px;font-size:12.5px;line-height:12.5px;color:#333;left:-287.2px;width:600px;text-align:center;">87</div><div class="r" style="left:0px;top:813px;width:25px;height:1px;background:#e0e0e0;"></div><div class="t" style="top:817.42px;font-size:12.5px;line-height:12.5px;color:#333;left:-287.2px;width:600px;text-align:center;">88</div><div class="r" style="left:0px;top:830px;width:25px;height:1px;background:#e0e0e0;"></div><div class="t" style="top:834.42px;font-size:12.5px;line-height:12.5px;color:#333;left:-287.2px;width:600px;text-align:center;">89</div><div class="r" style="left:0px;top:847px;width:25px;height:1px;background:#e0e0e0;"></div><div class="t" style="top:851.42px;font-size:12.5px;line-height:12.5px;color:#333;left:-287.2px;width:600px;text-align:center;">90</div><div class="r" style="left:0px;top:864px;width:25px;height:1px;background:#e0e0e0;"></div><div class="t" style="top:868.42px;font-size:12.5px;line-height:12.5px;color:#333;left:-287.2px;width:600px;text-align:center;">91</div><div class="r" style="left:0px;top:881px;width:25px;height:1px;background:#e0e0e0;"></div><div class="t" style="top:885.42px;font-size:12.5px;line-height:12.5px;color:#333;left:-287.2px;width:600px;text-align:center;">92</div><div class="r" style="left:0px;top:898px;width:25px;height:1px;background:#e0e0e0;"></div><div class="t" style="top:902.42px;font-size:12.5px;line-height:12.5px;color:#333;left:-287.2px;width:600px;text-align:center;">93</div><div class="r" style="left:0px;top:915px;width:25px;height:1px;background:#e0e0e0;"></div><div class="t" style="top:919.42px;font-size:12.5px;line-height:12.5px;color:#333;left:-287.2px;width:600px;text-align:center;">94</div><div class="r" style="left:0px;top:932px;width:25px;height:1px;background:#e0e0e0;"></div><div class="t" style="top:936.42px;font-size:12.5px;line-height:12.5px;color:#333;left:-287.2px;width:600px;text-align:center;">95</div><div class="r" style="left:0px;top:949px;width:25px;height:1px;background:#e0e0e0;"></div><div class="t" style="top:953.42px;font-size:12.5px;line-height:12.5px;color:#333;left:-287.2px;width:600px;text-align:center;">96</div><div class="r" style="left:0px;top:966px;width:25px;height:1px;background:#e0e0e0;"></div><div class="t" style="top:970.42px;font-size:12.5px;line-height:12.5px;color:#333;left:-287.2px;width:600px;text-align:center;">97</div><div class="r" style="left:0px;top:983px;width:25px;height:1px;background:#e0e0e0;"></div><div class="t" style="top:987.42px;font-size:12.5px;line-height:12.5px;color:#333;left:-287.2px;width:600px;text-align:center;">98</div><div class="r" style="left:0px;top:1000px;width:25px;height:1px;background:#e0e0e0;"></div><div class="t" style="top:1004.42px;font-size:12.5px;line-height:12.5px;color:#333;left:-287.2px;width:600px;text-align:center;">99</div><div class="r" style="left:0px;top:1017px;width:25px;height:1px;background:#e0e0e0;"></div><div class="t" style="top:1021.42px;font-size:12.5px;line-height:12.5px;color:#333;left:-287.2px;width:600px;text-align:center;">100</div><div class="r" style="left:0px;top:1034px;width:25px;height:1px;background:#e0e0e0;"></div><div class="t" style="top:1038.42px;font-size:12.5px;line-height:12.5px;color:#333;left:-287.2px;width:600px;text-align:center;">101</div><div class="r" style="left:0px;top:1051px;width:25px;height:1px;background:#e0e0e0;"></div><div class="t" style="top:1055.42px;font-size:12.5px;line-height:12.5px;color:#333;left:-287.2px;width:600px;text-align:center;">102</div><div class="r" style="left:0px;top:1068px;width:25px;height:1px;background:#e0e0e0;"></div><div class="t" style="top:1072.42px;font-size:12.5px;line-height:12.5px;color:#333;left:-287.2px;width:600px;text-align:center;">103</div><div class="r" style="left:0px;top:1085px;width:25px;height:1px;background:#e0e0e0;"></div><div class="t" style="top:1089.42px;font-size:12.5px;line-height:12.5px;color:#333;left:-287.2px;width:600px;text-align:center;">104</div><div class="r" style="left:0px;top:1102px;width:25px;height:1px;background:#e0e0e0;"></div><div class="t" style="top:1106.42px;font-size:12.5px;line-height:12.5px;color:#333;left:-287.2px;width:600px;text-align:center;">105</div><div class="r" style="left:0px;top:1119px;width:25px;height:1px;background:#e0e0e0;"></div><div class="t" style="top:1123.42px;font-size:12.5px;line-height:12.5px;color:#333;left:-287.2px;width:600px;text-align:center;">106</div><div class="r" style="left:0px;top:1136px;width:25px;height:1px;background:#e0e0e0;"></div><div class="t" style="top:1140.42px;font-size:12.5px;line-height:12.5px;color:#333;left:-287.2px;width:600px;text-align:center;">107</div><div class="r" style="left:0px;top:1153px;width:25px;height:1px;background:#e0e0e0;"></div><div class="t" style="top:1157.42px;font-size:12.5px;line-height:12.5px;color:#333;left:-287.2px;width:600px;text-align:center;">108</div><div class="r" style="left:0px;top:1170px;width:25px;height:1px;background:#e0e0e0;"></div><div class="t" style="top:1174.42px;font-size:12.5px;line-height:12.5px;color:#333;left:-287.2px;width:600px;text-align:center;">109</div><div class="r" style="left:0px;top:1187px;width:25px;height:1px;background:#e0e0e0;"></div><div class="t" style="top:1191.42px;font-size:12.5px;line-height:12.5px;color:#333;left:-287.2px;width:600px;text-align:center;">110</div><div class="r" style="left:0px;top:1204px;width:25px;height:1px;background:#e0e0e0;"></div><div class="t" style="top:1208.42px;font-size:12.5px;line-height:12.5px;color:#333;left:-287.2px;width:600px;text-align:center;">111</div><div class="r" style="left:0px;top:1221px;width:25px;height:1px;background:#e0e0e0;"></div><div class="t" style="top:1225.42px;font-size:12.5px;line-height:12.5px;color:#333;left:-287.2px;width:600px;text-align:center;">112</div><div class="r" style="left:0px;top:1238px;width:25px;height:1px;background:#e0e0e0;"></div><div class="t" style="top:1242.42px;font-size:12.5px;line-height:12.5px;color:#333;left:-287.2px;width:600px;text-align:center;">113</div><div class="r" style="left:0px;top:1255px;width:25px;height:1px;background:#e0e0e0;"></div><div class="t" style="top:1259.42px;font-size:12.5px;line-height:12.5px;color:#333;left:-287.2px;width:600px;text-align:center;">114</div><div class="r" style="left:0px;top:1272px;width:25px;height:1px;background:#e0e0e0;"></div><div class="t" style="top:1276.42px;font-size:12.5px;line-height:12.5px;color:#333;left:-287.2px;width:600px;text-align:center;">115</div><div class="r" style="left:0px;top:1289px;width:25px;height:1px;background:#e0e0e0;"></div><div class="t" style="top:1293.42px;font-size:12.5px;line-height:12.5px;color:#333;left:-287.2px;width:600px;text-align:center;">116</div><div class="r" style="left:0px;top:1306px;width:25px;height:1px;background:#e0e0e0;"></div><div class="t" style="top:1310.42px;font-size:12.5px;line-height:12.5px;color:#333;left:-287.2px;width:600px;text-align:center;">117</div><div class="r" style="left:0px;top:1323px;width:25px;height:1px;background:#e0e0e0;"></div><div class="t" style="top:1327.42px;font-size:12.5px;line-height:12.5px;color:#333;left:-287.2px;width:600px;text-align:center;">118</div><div class="r" style="left:0px;top:1340px;width:25px;height:1px;background:#e0e0e0;"></div><div class="t" style="top:1344.42px;font-size:12.5px;line-height:12.5px;color:#333;left:-287.2px;width:600px;text-align:center;">119</div><div class="r" style="left:0px;top:1357px;width:25px;height:1px;background:#e0e0e0;"></div><div class="t" style="top:1361.42px;font-size:12.5px;line-height:12.5px;color:#333;left:-287.2px;width:600px;text-align:center;">120</div><div class="r" style="left:0px;top:1374px;width:25px;height:1px;background:#e0e0e0;"></div><svg class="r" style="left:9px;top:273px;" width="14" height="12" viewBox="0 0 14 12"><path d="M13 0 V12 H1 Z" fill="#d8d8d8"/></svg><div class="r" style="left:549px;top:270px;width:1px;height:1107px;background:#9a9a9a;"></div><div class="r" style="left:1333px;top:456px;width:44px;height:1px;background:#8a8a8a;"></div><div class="r" style="left:0px;top:456px;width:48px;height:1px;background:#8a8a8a;"></div><div class="r" style="left:0px;top:1376px;width:1377px;height:1px;background:#d4d4d4;"></div><div class="r" style="left:0px;top:1377px;width:1377px;height:41px;background:#f0f0f0;"></div><div class="r" style="left:0px;top:1418px;width:1377px;height:1px;background:#fafafa;"></div><div class="r" style="left:0px;top:1419px;width:1377px;height:24px;background:#f3f3f3;"></div><div class="r" style="left:0px;top:1443px;width:1377px;height:4px;background:#2b1d1f;"></div><svg class="r" style="left:30px;top:1388px;" width="10" height="16" viewBox="0 0 10 16"><path d="M8 1.5 L2 8 L8 14.5" fill="none" stroke="#a8a8a8" stroke-width="1.3"/></svg><svg class="r" style="left:71px;top:1388px;" width="10" height="16" viewBox="0 0 10 16"><path d="M2 1.5 L8 8 L2 14.5" fill="none" stroke="#a8a8a8" stroke-width="1.3"/></svg><div class="r" style="left:141px;top:1382px;width:66px;height:30px;background:#c00000;border-radius:5px"></div><div class="t" style="top:1389.19px;font-size:17.5px;line-height:17.5px;color:#fff;letter-spacing:-0.672px;left:152px;">Cover</div><div class="r" style="left:212px;top:1386px;width:1px;height:23px;background:#cfcfcf;"></div><div class="t" style="top:1389.19px;font-size:17.5px;line-height:17.5px;color:#262626;letter-spacing:-0.119px;left:230px;">Assumptions</div><div class="r" style="left:345px;top:1386px;width:1px;height:23px;background:#cfcfcf;"></div><div class="t" style="top:1389.19px;font-size:17.5px;line-height:17.5px;color:#262626;letter-spacing:0.222px;left:363px;">Operating Model</div><div class="r" style="left:512px;top:1386px;width:1px;height:23px;background:#cfcfcf;"></div><div class="r" style="left:517px;top:1377px;width:40px;height:39px;background:#fff;border-radius:0 0 6px 6px;box-shadow:0 1px 2px rgba(0,0,0,0.15)"></div><div class="t" style="top:1385.61px;font-size:17px;line-height:17px;color:#262626;font-weight:bold;letter-spacing:-0.6px;left:528px;">FS</div><div class="r" style="left:528px;top:1406px;width:19px;height:2px;background:#1e7145;"></div><div class="r" style="left:562px;top:1386px;width:1px;height:23px;background:#cfcfcf;"></div><div class="t" style="top:1389.19px;font-size:17.5px;line-height:17.5px;color:#262626;letter-spacing:-0.156px;left:578px;">Debt</div><div class="r" style="left:632px;top:1386px;width:1px;height:23px;background:#cfcfcf;"></div><div class="t" style="top:1390.46px;font-size:16px;line-height:16px;color:#262626;letter-spacing:-0.5px;left:647.5px;">DCF</div><div class="r" style="left:694px;top:1386px;width:1px;height:23px;background:#cfcfcf;"></div><div class="r" style="left:700px;top:1382px;width:99px;height:30px;background:#c00000;border-radius:5px"></div><div class="t" style="top:1389.19px;font-size:17.5px;line-height:17.5px;color:#fff;letter-spacing:0.176px;left:711.5px;">Inputs -&gt;</div><div class="r" style="left:804px;top:1386px;width:1px;height:23px;background:#cfcfcf;"></div><div class="t" style="top:1389.19px;font-size:17.5px;line-height:17.5px;color:#262626;letter-spacing:-0.023px;left:823px;">Financial Information</div><div class="r" style="left:1004px;top:1386px;width:1px;height:23px;background:#cfcfcf;"></div><svg class="r" style="left:1056px;top:1389px;" width="16" height="16" viewBox="0 0 16 16"><path d="M8 1 V15 M1 8 H15" stroke="#333" stroke-width="1.4"/></svg><svg class="r" style="left:1355px;top:1389px;" width="5" height="16" viewBox="0 0 5 16"><rect x="1" y="1.5" width="2.4" height="2.4" fill="#222"/><rect x="1" y="6.8" width="2.4" height="2.4" fill="#222"/><rect x="1" y="12" width="2.4" height="2.4" fill="#222"/></svg><div class="t" style="top:1424.57px;font-size:13.5px;line-height:13.5px;color:#333;letter-spacing:-0.758px;left:9px;">Ready</div><svg class="r" style="left:69px;top:1421px;" width="21" height="21" viewBox="0 0 21 21"><circle cx="8.6" cy="4.2" r="2.4" fill="none" stroke="#222" stroke-width="1.2"/><path d="M6.3 7.8 C4 7 1.3 6.5 1.2 8.6 C1.1 10.6 4.3 10.7 6.3 11.8 L5.2 17.8 C5 19.6 7.4 19.8 7.9 18.2 L9.3 14.2 L10.2 16 M12 11 C13.8 10.2 16.3 10.4 16.3 8.5 C16.3 6.5 13 7 10.8 7.8" fill="none" stroke="#222" stroke-width="1.2" stroke-linejoin="round"/><path d="M10.8 12.6 L18.5 19.4 M18.5 12.6 L10.8 19.4" stroke="#222" stroke-width="1.1"/></svg><div class="t" style="top:1424.57px;font-size:13.5px;line-height:13.5px;color:#333;letter-spacing:-0.333px;left:92px;">Accessibility: Investigate</div></body></html>
